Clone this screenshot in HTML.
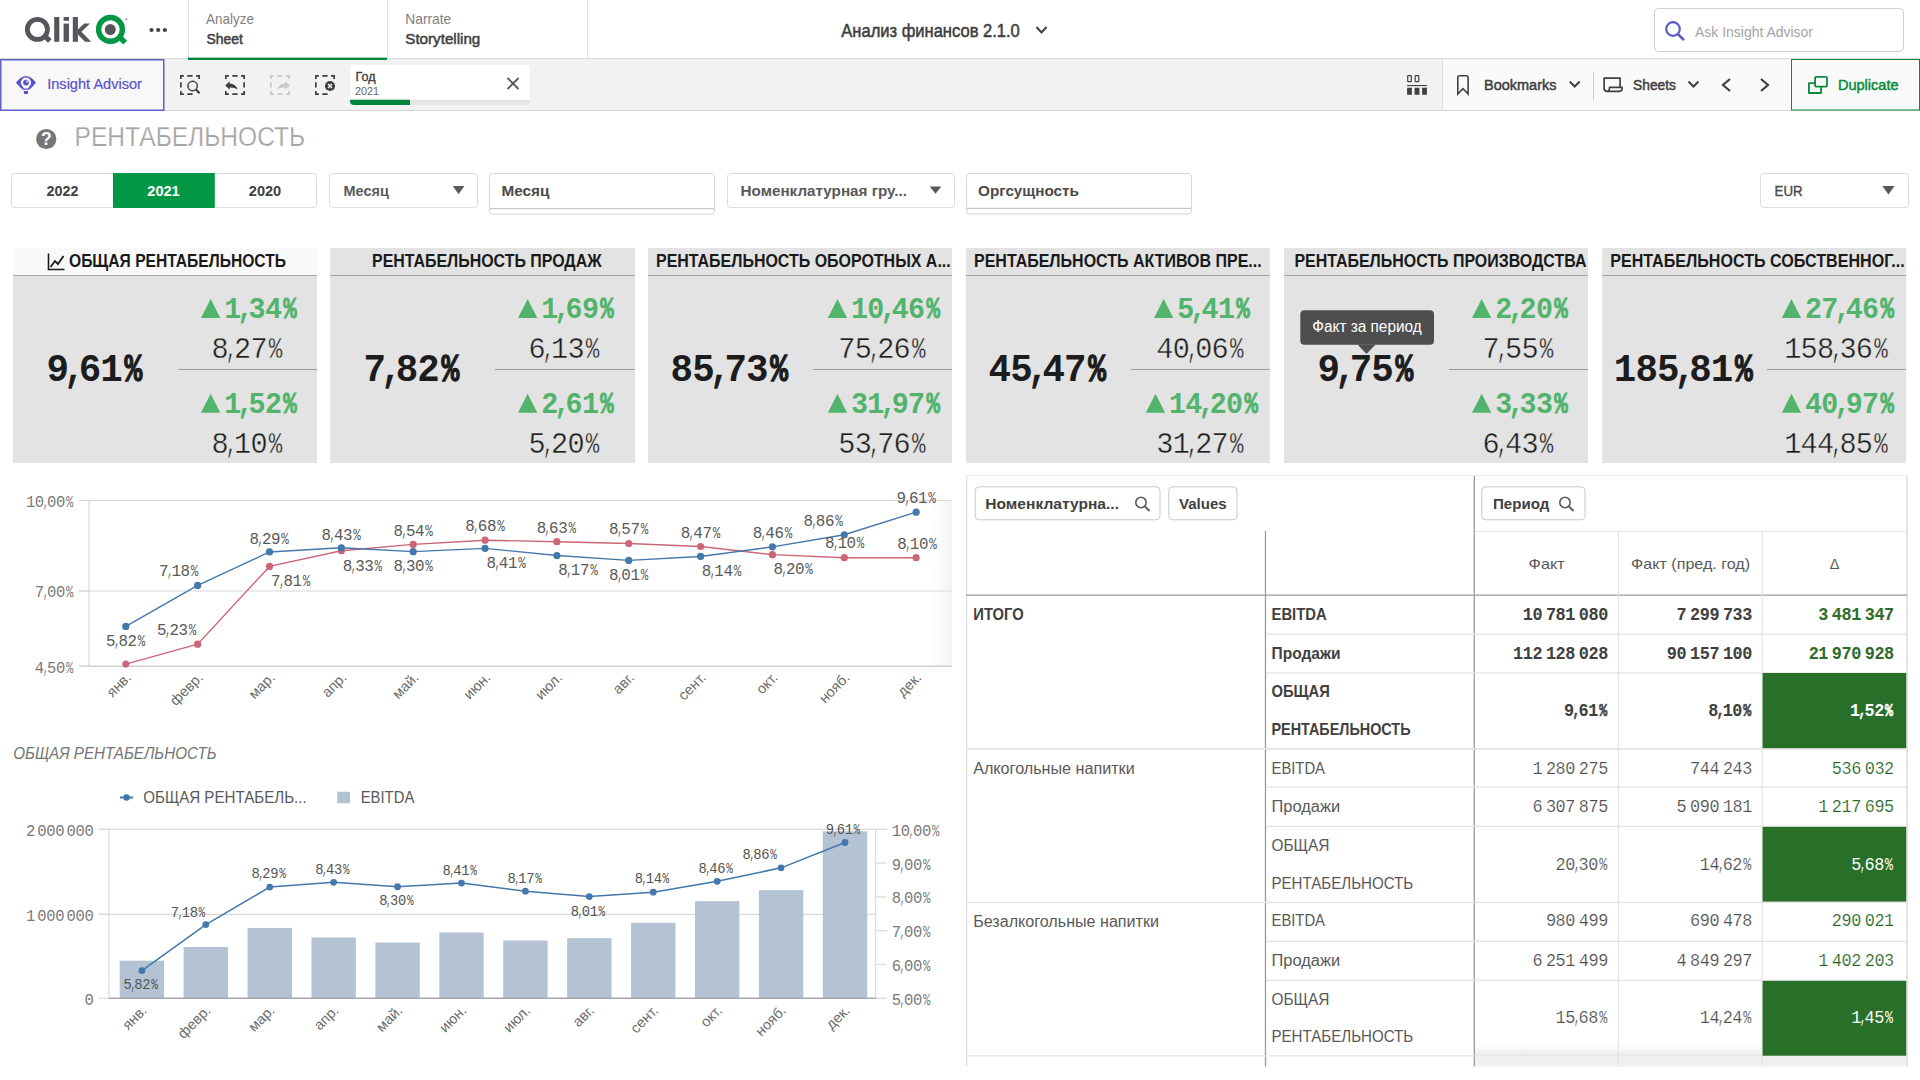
<!DOCTYPE html>
<html lang="ru"><head><meta charset="utf-8"><title>Анализ финансов 2.1.0 - Рентабельность</title>
<style>
html,body{margin:0;padding:0;background:#ffffff;width:1920px;height:1080px;overflow:hidden;}
svg{display:block;font-family:"Liberation Sans", sans-serif;}
</style></head>
<body>
<svg width="1920" height="1080" viewBox="0 0 1920 1080">
<rect x="0" y="0" width="1920" height="59" fill="#ffffff"/>
<circle cx="37.4" cy="29.4" r="10.05" fill="none" stroke="#54565b" stroke-width="4.8"/>
<polygon points="42.5,37.2 46.2,33.6 51.6,39.2 48,42.8" fill="#54565b"/>
<rect x="54.2" y="17" width="5.1" height="24.8" fill="#54565b"/>
<rect x="63.6" y="17" width="5.4" height="3.8" fill="#54565b"/>
<rect x="63.6" y="23.6" width="5.4" height="18.2" fill="#54565b"/>
<rect x="72.8" y="17" width="5.1" height="24.8" fill="#54565b"/>
<polygon points="77.9,29.6 84.3,23.6 90,23.6 81.4,31.8 91.2,41.8 85,41.8 77.9,34.6" fill="#54565b"/>
<circle cx="110.5" cy="29.4" r="11.9" fill="none" stroke="#009845" stroke-width="5.4"/>
<circle cx="110.3" cy="29.5" r="5.5" fill="#54565b"/>
<polygon points="117.2,38.6 121,34.8 127,40.8 123.2,44.6" fill="#009845"/>
<circle cx="126.2" cy="19.2" r="1.3" fill="#bbb"/>
<circle cx="151.5" cy="30" r="2.1" fill="#404040"/>
<circle cx="158.2" cy="30" r="2.1" fill="#404040"/>
<circle cx="164.9" cy="30" r="2.1" fill="#404040"/>
<line x1="188.5" y1="0" x2="188.5" y2="58" stroke="#e3e3e3" stroke-width="1" />
<line x1="387.5" y1="0" x2="387.5" y2="58" stroke="#e3e3e3" stroke-width="1" />
<line x1="587.5" y1="0" x2="587.5" y2="58" stroke="#e3e3e3" stroke-width="1" />
<rect x="188" y="57.8" width="199" height="2.2" fill="#00873c"/>
<text x="206.00" y="23.80" font-size="14.2" fill="#808080" textLength="47.90" lengthAdjust="spacingAndGlyphs">Analyze</text>
<text x="206.50" y="43.80" font-size="15" fill="#404040" textLength="36.50" lengthAdjust="spacingAndGlyphs" stroke="#404040" stroke-width="0.5">Sheet</text>
<text x="405.30" y="23.80" font-size="14.2" fill="#808080" textLength="46.00" lengthAdjust="spacingAndGlyphs">Narrate</text>
<text x="405.30" y="43.80" font-size="15" fill="#404040" textLength="75.00" lengthAdjust="spacingAndGlyphs" stroke="#404040" stroke-width="0.5">Storytelling</text>
<text x="841.30" y="36.60" font-size="18.5" fill="#404040" textLength="178.50" lengthAdjust="spacingAndGlyphs" stroke="#404040" stroke-width="0.55">Анализ финансов 2.1.0</text>
<polyline points="1036.5,27 1041.5,32.5 1046.5,27" fill="none" stroke="#404040" stroke-width="2"/>
<rect x="1654.5" y="8.5" width="249" height="43" fill="#ffffff" stroke="#cfcfcf" stroke-width="1" rx="4"/>
<circle cx="1673" cy="29" r="6.8" fill="none" stroke="#5c5cc8" stroke-width="2.2"/>
<line x1="1677.8" y1="34" x2="1684" y2="40.2" stroke="#5c5cc8" stroke-width="2.6" />
<text x="1695.00" y="36.60" font-size="14.5" fill="#a3a3a3" textLength="118.00" lengthAdjust="spacingAndGlyphs">Ask Insight Advisor</text>
<rect x="0" y="59" width="1920" height="51" fill="#f2f2f2"/>
<line x1="0" y1="58.5" x2="1920" y2="58.5" stroke="#dadada" stroke-width="1" />
<line x1="0" y1="110.5" x2="1920" y2="110.5" stroke="#d6d6d6" stroke-width="1" />
<rect x="188" y="57.8" width="199" height="2.2" fill="#00873c"/>
<rect x="0.75" y="59.75" width="163" height="50.5" fill="#f8f8f8" stroke="#6060c8" stroke-width="1.5"/>
<path d="M16,82.8 Q21,76 26,76 Q31,76 36,82.8 Q32,87.5 29.2,89.7 L22.8,89.7 Q20,87.5 16,82.8 Z" fill="#5a52cc"/>
<circle cx="26" cy="82.6" r="5.1" fill="#f8f8f8"/>
<polygon points="22.2,84.8 29.8,84.8 28.4,88.6 23.6,88.6" fill="#f8f8f8"/>
<circle cx="26" cy="82.6" r="2.9" fill="#5a52cc"/>
<circle cx="27.1" cy="81.4" r="1" fill="#f8f8f8"/>
<polygon points="23.7,91.1 28.3,91.1 27.8,93.9 24.2,93.9" fill="#5a52cc"/>
<text x="47.20" y="89.40" font-size="13.8" fill="#5a52cc" textLength="94.80" lengthAdjust="spacingAndGlyphs" stroke="#5a52cc" stroke-width="0.2">Insight Advisor</text>
<path d="M180.85,78.9 V75.85 H183.9 M187.3,75.85 H192.6 M196,75.85 H199.15 V78.9 M192.6,94.15 H187.3 M183.9,94.15 H180.85 V91 M180.85,87.6 V82.3" fill="none" stroke="#404040" stroke-width="1.7"/>
<circle cx="192.6" cy="86" r="4.7" fill="none" stroke="#404040" stroke-width="1.5"/>
<line x1="195.9" y1="89.4" x2="199.6" y2="93.2" stroke="#404040" stroke-width="2.2" />
<path d="M225.85,78.9 V75.85 H228.9 M232.3,75.85 H237.6 M241,75.85 H244.15 V78.9 M244.15,82.3 V87.6 M244.15,91 V94.15 H241 M237.6,94.15 H232.3 M228.9,94.15 H225.85 V91" fill="none" stroke="#404040" stroke-width="1.7"/>
<path d="M225.2,85.4 L229.7,81.2 L229.7,83.6 Q235.5,83.6 237.8,89.6 Q234.5,87.4 229.7,87.6 L229.7,89.8 Z" fill="#404040"/>
<path d="M270.85,78.9 V75.85 H273.9 M277.3,75.85 H282.6 M286,75.85 H289.15 V78.9 M289.15,91 V94.15 H286 M282.6,94.15 H277.3 M273.9,94.15 H270.85 V91 M270.85,87.6 V82.3" fill="none" stroke="#c9c9c9" stroke-width="1.7"/>
<path d="M289.8,85.4 L285.3,81.2 L285.3,83.6 Q279.5,83.6 277.2,89.6 Q280.5,87.4 285.3,87.6 L285.3,89.8 Z" fill="#c9c9c9"/>
<path d="M315.85,78.9 V75.85 H318.9 M322.3,75.85 H327.6 M331,75.85 H334.15 V78.9 M327.6,94.15 H322.3 M318.9,94.15 H315.85 V91 M315.85,87.6 V82.3" fill="none" stroke="#404040" stroke-width="1.7"/>
<circle cx="330" cy="86" r="5.1" fill="#404040"/>
<path d="M328,84 L332,88 M332,84 L328,88" stroke="#f2f2f2" stroke-width="1.5"/>
<rect x="350" y="65" width="180" height="40" fill="#ffffff" rx="4"/>
<path d="M350,99.8 L530,99.8 L530,101 Q530,105 526,105 L354,105 Q350,105 350,101 Z" fill="#e6e6e6"/>
<path d="M350,99.8 L410,99.8 L410,105 L354,105 Q350,105 350,101 Z" fill="#00843d"/>
<text x="355.60" y="80.70" font-size="12.4" fill="#404040" textLength="20.00" lengthAdjust="spacingAndGlyphs" stroke="#404040" stroke-width="0.35">Год</text>
<text x="355.00" y="94.80" font-size="11.2" fill="#666666" textLength="24.10" lengthAdjust="spacingAndGlyphs">2021</text>
<path d="M507.5,78 L518.5,89 M518.5,78 L507.5,89" stroke="#595959" stroke-width="1.8"/>
<rect x="1442" y="59.5" width="349" height="50.5" fill="#fafafa"/>
<line x1="1442.5" y1="59" x2="1442.5" y2="110" stroke="#dcdcdc" stroke-width="1" />
<rect x="1407.6999999999998" y="75.6" width="3.6" height="6.1" fill="none" stroke="#404040" stroke-width="1.2" rx="0.6"/>
<rect x="1415.1999999999998" y="75.6" width="3.6" height="6.1" fill="none" stroke="#404040" stroke-width="1.2" rx="0.6"/>
<rect x="1407.1" y="85" width="19.8" height="1.1" fill="#404040"/>
<rect x="1407.1" y="87.7" width="4.8" height="7.1" fill="#404040"/>
<rect x="1414.6" y="87.7" width="4.8" height="7.1" fill="#404040"/>
<rect x="1422.1" y="87.7" width="4.8" height="7.1" fill="#404040"/>
<path d="M1457.8,94 L1457.8,77.5 Q1457.8,75.8 1459.5,75.8 L1466.3,75.8 Q1468.1,75.8 1468.1,77.5 L1468.1,94 L1463,88.7 Z" fill="none" stroke="#404040" stroke-width="1.6" stroke-linejoin="miter"/>
<text x="1484.00" y="90.20" font-size="15.2" fill="#404040" textLength="72.50" lengthAdjust="spacingAndGlyphs" stroke="#404040" stroke-width="0.5">Bookmarks</text>
<polyline points="1569.7,81.5 1574.7,86.5 1579.7,81.5" fill="none" stroke="#404040" stroke-width="2"/>
<line x1="1593.5" y1="72" x2="1593.5" y2="100" stroke="#d0d0d0" stroke-width="1" />
<path d="M1620.1,87.3 V78.2 H1604.1 V88.2 Q1604.1,91.3 1607.2,91.3 H1619.4 Q1622.1,91.3 1622.1,88.6 V87.3 H1609.5 Q1609.5,91.3 1607.2,91.3" fill="none" stroke="#404040" stroke-width="1.7" stroke-linejoin="round"/>
<text x="1633.00" y="90.20" font-size="15.2" fill="#404040" textLength="43.00" lengthAdjust="spacingAndGlyphs" stroke="#404040" stroke-width="0.5">Sheets</text>
<polyline points="1688.5,81.5 1693.5,86.5 1698.5,81.5" fill="none" stroke="#404040" stroke-width="2"/>
<polyline points="1730,79 1723,85 1730,91" fill="none" stroke="#404040" stroke-width="2.2"/>
<polyline points="1761,79 1768,85 1761,91" fill="none" stroke="#404040" stroke-width="2.2"/>
<rect x="1791.5" y="59.5" width="128" height="50.5" fill="#fafafa" stroke="#0a8a3c" stroke-width="1"/>
<path d="M1815.1,83.1 H1808.9 V93 H1821.1 V86.6" fill="none" stroke="#0a8a3c" stroke-width="1.8" stroke-linejoin="round"/>
<rect x="1815.1" y="76.9" width="11.9" height="9.7" rx="1" fill="none" stroke="#0a8a3c" stroke-width="1.8"/>
<text x="1838.00" y="90.20" font-size="15.2" fill="#0a8a3c" textLength="60.50" lengthAdjust="spacingAndGlyphs" stroke="#0a8a3c" stroke-width="0.5">Duplicate</text>
<circle cx="46.25" cy="139" r="10.1" fill="#767676"/>
<text x="46.30" y="145.00" font-size="17.5" fill="#ffffff" font-weight="bold" text-anchor="middle">?</text>
<text x="74.60" y="146.00" font-size="27" fill="#a5a5a5" textLength="230.60" lengthAdjust="spacingAndGlyphs" stroke="#ffffff" stroke-width="0.25">РЕНТАБЕЛЬНОСТЬ</text>
<rect x="11.5" y="173.5" width="305" height="34" fill="#ffffff" stroke="#dcdcdc" stroke-width="1" rx="3"/>
<rect x="113" y="173" width="101.8" height="35" fill="#009845"/>
<text x="46.40" y="196.00" font-size="15" fill="#404040" font-weight="bold" textLength="32.00" lengthAdjust="spacingAndGlyphs">2022</text>
<text x="147.30" y="196.00" font-size="15" fill="#ffffff" font-weight="bold" textLength="32.40" lengthAdjust="spacingAndGlyphs">2021</text>
<text x="248.80" y="196.00" font-size="15" fill="#404040" font-weight="bold" textLength="32.40" lengthAdjust="spacingAndGlyphs">2020</text>
<rect x="329.5" y="173.5" width="148" height="34" fill="#ffffff" stroke="#dcdcdc" stroke-width="1" rx="3"/>
<text x="343.50" y="196.00" font-size="15" fill="#595959" font-weight="bold" textLength="45.30" lengthAdjust="spacingAndGlyphs">Месяц</text>
<polygon points="452.8,186 464.4,186 458.6,194.2" fill="#595959"/>
<rect x="489.5" y="173.5" width="225" height="40.5" fill="#ffffff" stroke="#d6d6d6" stroke-width="1" rx="3"/>
<line x1="490" y1="208.7" x2="714" y2="208.7" stroke="#c8c8c8" stroke-width="1.2" />
<text x="501.50" y="196.00" font-size="15.5" fill="#4a4a4a" font-weight="bold" textLength="48.00" lengthAdjust="spacingAndGlyphs">Месяц</text>
<rect x="727.5" y="173.5" width="227" height="34" fill="#ffffff" stroke="#dcdcdc" stroke-width="1" rx="3"/>
<text x="740.60" y="196.20" font-size="15" fill="#595959" font-weight="bold" textLength="166.30" lengthAdjust="spacingAndGlyphs">Номенклатурная гру...</text>
<polygon points="929.7,186.6 941.3,186.6 935.5,193.8" fill="#595959"/>
<rect x="966.5" y="173.5" width="225" height="40.5" fill="#ffffff" stroke="#d6d6d6" stroke-width="1" rx="3"/>
<line x1="967" y1="208.3" x2="1191" y2="208.3" stroke="#c8c8c8" stroke-width="1.2" />
<text x="978.00" y="196.20" font-size="15.5" fill="#4a4a4a" font-weight="bold" textLength="101.00" lengthAdjust="spacingAndGlyphs">Оргсущность</text>
<rect x="1760.5" y="173.5" width="148" height="34" fill="#ffffff" stroke="#dcdcdc" stroke-width="1" rx="3"/>
<text x="1774.60" y="196.00" font-size="15" fill="#4a4a4a" textLength="28.00" lengthAdjust="spacingAndGlyphs" stroke="#4a4a4a" stroke-width="0.4">EUR</text>
<polygon points="1882.4,186 1894.5,186 1888.45,194.4" fill="#595959"/>
<rect x="13" y="248" width="304" height="27" fill="#f9f9f9"/>
<rect x="13" y="275" width="304" height="1" fill="#a3a3a3"/>
<rect x="13" y="276" width="304" height="187" fill="#e3e3e3"/>
<text x="69.00" y="266.60" font-size="18.2" fill="#1a1a1a" font-weight="bold" textLength="217.00" lengthAdjust="spacingAndGlyphs">ОБЩАЯ РЕНТАБЕЛЬНОСТЬ</text>
<path d="M48.5,253.5 L48.5,269.5 L64.5,269.5" fill="none" stroke="#1a1a1a" stroke-width="1.6"/>
<polyline points="50.5,267 55,261 58,264 63.5,256" fill="none" stroke="#1a1a1a" stroke-width="1.8"/>
<text x="57.64" y="380.80" font-size="39.45" fill="#1c1c1c" font-weight="bold" font-family='"Liberation Mono", monospace' text-anchor="middle" textLength="22.49" lengthAdjust="spacingAndGlyphs" >9</text>
<text x="73.76" y="380.80" font-size="39.45" fill="#1c1c1c" font-weight="bold" font-family='"Liberation Mono", monospace' text-anchor="middle" textLength="16.57" lengthAdjust="spacingAndGlyphs" stroke="#1c1c1c" stroke-width="1.30">,</text>
<text x="89.88" y="380.80" font-size="39.45" fill="#1c1c1c" font-weight="bold" font-family='"Liberation Mono", monospace' text-anchor="middle" textLength="22.49" lengthAdjust="spacingAndGlyphs" >6</text>
<text x="111.46" y="380.80" font-size="39.45" fill="#1c1c1c" font-weight="bold" font-family='"Liberation Mono", monospace' text-anchor="middle" textLength="22.49" lengthAdjust="spacingAndGlyphs" >1</text>
<text x="133.30" y="380.80" font-size="39.45" fill="#1c1c1c" font-weight="bold" font-family='"Liberation Mono", monospace' text-anchor="middle" textLength="17.75" lengthAdjust="spacingAndGlyphs" stroke="#1c1c1c" stroke-width="1.30">%</text>
<rect x="178" y="369" width="139" height="1" fill="#9a9a9a"/>
<polygon points="201.01,317.90 220.31,317.90 210.66,298.90" fill="#52b46c"/>
<text x="232.69" y="317.90" font-size="29.89" fill="#52b46c" font-weight="bold" font-family='"Liberation Mono", monospace' text-anchor="middle" textLength="17.04" lengthAdjust="spacingAndGlyphs" >1</text>
<text x="244.90" y="317.90" font-size="29.89" fill="#52b46c" font-weight="bold" font-family='"Liberation Mono", monospace' text-anchor="middle" textLength="12.56" lengthAdjust="spacingAndGlyphs" stroke="#52b46c" stroke-width="0.98">,</text>
<text x="257.12" y="317.90" font-size="29.89" fill="#52b46c" font-weight="bold" font-family='"Liberation Mono", monospace' text-anchor="middle" textLength="17.04" lengthAdjust="spacingAndGlyphs" >3</text>
<text x="273.47" y="317.90" font-size="29.89" fill="#52b46c" font-weight="bold" font-family='"Liberation Mono", monospace' text-anchor="middle" textLength="17.04" lengthAdjust="spacingAndGlyphs" >4</text>
<text x="290.01" y="317.90" font-size="29.89" fill="#52b46c" font-weight="bold" font-family='"Liberation Mono", monospace' text-anchor="middle" textLength="13.45" lengthAdjust="spacingAndGlyphs" stroke="#52b46c" stroke-width="0.98">%</text>
<polygon points="201.01,412.80 220.31,412.80 210.66,393.80" fill="#52b46c"/>
<text x="232.69" y="412.80" font-size="29.89" fill="#52b46c" font-weight="bold" font-family='"Liberation Mono", monospace' text-anchor="middle" textLength="17.04" lengthAdjust="spacingAndGlyphs" >1</text>
<text x="244.90" y="412.80" font-size="29.89" fill="#52b46c" font-weight="bold" font-family='"Liberation Mono", monospace' text-anchor="middle" textLength="12.56" lengthAdjust="spacingAndGlyphs" stroke="#52b46c" stroke-width="0.98">,</text>
<text x="257.12" y="412.80" font-size="29.89" fill="#52b46c" font-weight="bold" font-family='"Liberation Mono", monospace' text-anchor="middle" textLength="17.04" lengthAdjust="spacingAndGlyphs" >5</text>
<text x="273.47" y="412.80" font-size="29.89" fill="#52b46c" font-weight="bold" font-family='"Liberation Mono", monospace' text-anchor="middle" textLength="17.04" lengthAdjust="spacingAndGlyphs" >2</text>
<text x="290.01" y="412.80" font-size="29.89" fill="#52b46c" font-weight="bold" font-family='"Liberation Mono", monospace' text-anchor="middle" textLength="13.45" lengthAdjust="spacingAndGlyphs" stroke="#52b46c" stroke-width="0.98">%</text>
<text x="220.13" y="357.80" font-size="30.05" fill="#1c1c1c" font-weight="normal" font-family='"Liberation Mono", monospace' text-anchor="middle" textLength="17.13" lengthAdjust="spacingAndGlyphs" stroke="#e3e3e3" stroke-width="0.4">8</text>
<text x="231.32" y="357.80" font-size="30.05" fill="#1c1c1c" font-weight="normal" font-family='"Liberation Mono", monospace' text-anchor="middle" textLength="9.92" lengthAdjust="spacingAndGlyphs" stroke="#e3e3e3" stroke-width="0.4">,</text>
<text x="242.50" y="357.80" font-size="30.05" fill="#1c1c1c" font-weight="normal" font-family='"Liberation Mono", monospace' text-anchor="middle" textLength="17.13" lengthAdjust="spacingAndGlyphs" stroke="#e3e3e3" stroke-width="0.4">2</text>
<text x="258.94" y="357.80" font-size="30.05" fill="#1c1c1c" font-weight="normal" font-family='"Liberation Mono", monospace' text-anchor="middle" textLength="17.13" lengthAdjust="spacingAndGlyphs" stroke="#e3e3e3" stroke-width="0.4">7</text>
<text x="275.57" y="357.80" font-size="30.05" fill="#1c1c1c" font-weight="normal" font-family='"Liberation Mono", monospace' text-anchor="middle" textLength="13.52" lengthAdjust="spacingAndGlyphs" stroke="#e3e3e3" stroke-width="0.4">%</text>
<text x="220.13" y="452.80" font-size="30.05" fill="#1c1c1c" font-weight="normal" font-family='"Liberation Mono", monospace' text-anchor="middle" textLength="17.13" lengthAdjust="spacingAndGlyphs" stroke="#e3e3e3" stroke-width="0.4">8</text>
<text x="231.32" y="452.80" font-size="30.05" fill="#1c1c1c" font-weight="normal" font-family='"Liberation Mono", monospace' text-anchor="middle" textLength="9.92" lengthAdjust="spacingAndGlyphs" stroke="#e3e3e3" stroke-width="0.4">,</text>
<text x="242.50" y="452.80" font-size="30.05" fill="#1c1c1c" font-weight="normal" font-family='"Liberation Mono", monospace' text-anchor="middle" textLength="17.13" lengthAdjust="spacingAndGlyphs" stroke="#e3e3e3" stroke-width="0.4">1</text>
<text x="258.94" y="452.80" font-size="30.05" fill="#1c1c1c" font-weight="normal" font-family='"Liberation Mono", monospace' text-anchor="middle" textLength="17.13" lengthAdjust="spacingAndGlyphs" stroke="#e3e3e3" stroke-width="0.4">0</text>
<text x="275.57" y="452.80" font-size="30.05" fill="#1c1c1c" font-weight="normal" font-family='"Liberation Mono", monospace' text-anchor="middle" textLength="13.52" lengthAdjust="spacingAndGlyphs" stroke="#e3e3e3" stroke-width="0.4">%</text>
<rect x="330" y="248" width="305" height="27" fill="#e3e3e3"/>
<rect x="330" y="275" width="305" height="1" fill="#a3a3a3"/>
<rect x="330" y="276" width="305" height="187" fill="#e3e3e3"/>
<text x="372.00" y="266.60" font-size="18.2" fill="#1a1a1a" font-weight="bold" textLength="229.60" lengthAdjust="spacingAndGlyphs">РЕНТАБЕЛЬНОСТЬ ПРОДАЖ</text>
<text x="374.64" y="380.80" font-size="39.45" fill="#1c1c1c" font-weight="bold" font-family='"Liberation Mono", monospace' text-anchor="middle" textLength="22.49" lengthAdjust="spacingAndGlyphs" >7</text>
<text x="390.76" y="380.80" font-size="39.45" fill="#1c1c1c" font-weight="bold" font-family='"Liberation Mono", monospace' text-anchor="middle" textLength="16.57" lengthAdjust="spacingAndGlyphs" stroke="#1c1c1c" stroke-width="1.30">,</text>
<text x="406.88" y="380.80" font-size="39.45" fill="#1c1c1c" font-weight="bold" font-family='"Liberation Mono", monospace' text-anchor="middle" textLength="22.49" lengthAdjust="spacingAndGlyphs" >8</text>
<text x="428.46" y="380.80" font-size="39.45" fill="#1c1c1c" font-weight="bold" font-family='"Liberation Mono", monospace' text-anchor="middle" textLength="22.49" lengthAdjust="spacingAndGlyphs" >2</text>
<text x="450.30" y="380.80" font-size="39.45" fill="#1c1c1c" font-weight="bold" font-family='"Liberation Mono", monospace' text-anchor="middle" textLength="17.75" lengthAdjust="spacingAndGlyphs" stroke="#1c1c1c" stroke-width="1.30">%</text>
<rect x="495" y="369" width="140" height="1" fill="#9a9a9a"/>
<polygon points="518.01,317.90 537.31,317.90 527.66,298.90" fill="#52b46c"/>
<text x="549.69" y="317.90" font-size="29.89" fill="#52b46c" font-weight="bold" font-family='"Liberation Mono", monospace' text-anchor="middle" textLength="17.04" lengthAdjust="spacingAndGlyphs" >1</text>
<text x="561.90" y="317.90" font-size="29.89" fill="#52b46c" font-weight="bold" font-family='"Liberation Mono", monospace' text-anchor="middle" textLength="12.56" lengthAdjust="spacingAndGlyphs" stroke="#52b46c" stroke-width="0.98">,</text>
<text x="574.12" y="317.90" font-size="29.89" fill="#52b46c" font-weight="bold" font-family='"Liberation Mono", monospace' text-anchor="middle" textLength="17.04" lengthAdjust="spacingAndGlyphs" >6</text>
<text x="590.47" y="317.90" font-size="29.89" fill="#52b46c" font-weight="bold" font-family='"Liberation Mono", monospace' text-anchor="middle" textLength="17.04" lengthAdjust="spacingAndGlyphs" >9</text>
<text x="607.01" y="317.90" font-size="29.89" fill="#52b46c" font-weight="bold" font-family='"Liberation Mono", monospace' text-anchor="middle" textLength="13.45" lengthAdjust="spacingAndGlyphs" stroke="#52b46c" stroke-width="0.98">%</text>
<polygon points="518.01,412.80 537.31,412.80 527.66,393.80" fill="#52b46c"/>
<text x="549.69" y="412.80" font-size="29.89" fill="#52b46c" font-weight="bold" font-family='"Liberation Mono", monospace' text-anchor="middle" textLength="17.04" lengthAdjust="spacingAndGlyphs" >2</text>
<text x="561.90" y="412.80" font-size="29.89" fill="#52b46c" font-weight="bold" font-family='"Liberation Mono", monospace' text-anchor="middle" textLength="12.56" lengthAdjust="spacingAndGlyphs" stroke="#52b46c" stroke-width="0.98">,</text>
<text x="574.12" y="412.80" font-size="29.89" fill="#52b46c" font-weight="bold" font-family='"Liberation Mono", monospace' text-anchor="middle" textLength="17.04" lengthAdjust="spacingAndGlyphs" >6</text>
<text x="590.47" y="412.80" font-size="29.89" fill="#52b46c" font-weight="bold" font-family='"Liberation Mono", monospace' text-anchor="middle" textLength="17.04" lengthAdjust="spacingAndGlyphs" >1</text>
<text x="607.01" y="412.80" font-size="29.89" fill="#52b46c" font-weight="bold" font-family='"Liberation Mono", monospace' text-anchor="middle" textLength="13.45" lengthAdjust="spacingAndGlyphs" stroke="#52b46c" stroke-width="0.98">%</text>
<text x="537.13" y="357.80" font-size="30.05" fill="#1c1c1c" font-weight="normal" font-family='"Liberation Mono", monospace' text-anchor="middle" textLength="17.13" lengthAdjust="spacingAndGlyphs" stroke="#e3e3e3" stroke-width="0.4">6</text>
<text x="548.32" y="357.80" font-size="30.05" fill="#1c1c1c" font-weight="normal" font-family='"Liberation Mono", monospace' text-anchor="middle" textLength="9.92" lengthAdjust="spacingAndGlyphs" stroke="#e3e3e3" stroke-width="0.4">,</text>
<text x="559.50" y="357.80" font-size="30.05" fill="#1c1c1c" font-weight="normal" font-family='"Liberation Mono", monospace' text-anchor="middle" textLength="17.13" lengthAdjust="spacingAndGlyphs" stroke="#e3e3e3" stroke-width="0.4">1</text>
<text x="575.94" y="357.80" font-size="30.05" fill="#1c1c1c" font-weight="normal" font-family='"Liberation Mono", monospace' text-anchor="middle" textLength="17.13" lengthAdjust="spacingAndGlyphs" stroke="#e3e3e3" stroke-width="0.4">3</text>
<text x="592.57" y="357.80" font-size="30.05" fill="#1c1c1c" font-weight="normal" font-family='"Liberation Mono", monospace' text-anchor="middle" textLength="13.52" lengthAdjust="spacingAndGlyphs" stroke="#e3e3e3" stroke-width="0.4">%</text>
<text x="537.13" y="452.80" font-size="30.05" fill="#1c1c1c" font-weight="normal" font-family='"Liberation Mono", monospace' text-anchor="middle" textLength="17.13" lengthAdjust="spacingAndGlyphs" stroke="#e3e3e3" stroke-width="0.4">5</text>
<text x="548.32" y="452.80" font-size="30.05" fill="#1c1c1c" font-weight="normal" font-family='"Liberation Mono", monospace' text-anchor="middle" textLength="9.92" lengthAdjust="spacingAndGlyphs" stroke="#e3e3e3" stroke-width="0.4">,</text>
<text x="559.50" y="452.80" font-size="30.05" fill="#1c1c1c" font-weight="normal" font-family='"Liberation Mono", monospace' text-anchor="middle" textLength="17.13" lengthAdjust="spacingAndGlyphs" stroke="#e3e3e3" stroke-width="0.4">2</text>
<text x="575.94" y="452.80" font-size="30.05" fill="#1c1c1c" font-weight="normal" font-family='"Liberation Mono", monospace' text-anchor="middle" textLength="17.13" lengthAdjust="spacingAndGlyphs" stroke="#e3e3e3" stroke-width="0.4">0</text>
<text x="592.57" y="452.80" font-size="30.05" fill="#1c1c1c" font-weight="normal" font-family='"Liberation Mono", monospace' text-anchor="middle" textLength="13.52" lengthAdjust="spacingAndGlyphs" stroke="#e3e3e3" stroke-width="0.4">%</text>
<rect x="648" y="248" width="304" height="27" fill="#e3e3e3"/>
<rect x="648" y="275" width="304" height="1" fill="#a3a3a3"/>
<rect x="648" y="276" width="304" height="187" fill="#e3e3e3"/>
<text x="656.00" y="266.60" font-size="18.2" fill="#1a1a1a" font-weight="bold" textLength="294.70" lengthAdjust="spacingAndGlyphs">РЕНТАБЕЛЬНОСТЬ ОБОРОТНЫХ А...</text>
<text x="681.85" y="380.80" font-size="39.45" fill="#1c1c1c" font-weight="bold" font-family='"Liberation Mono", monospace' text-anchor="middle" textLength="22.49" lengthAdjust="spacingAndGlyphs" >8</text>
<text x="703.43" y="380.80" font-size="39.45" fill="#1c1c1c" font-weight="bold" font-family='"Liberation Mono", monospace' text-anchor="middle" textLength="22.49" lengthAdjust="spacingAndGlyphs" >5</text>
<text x="719.55" y="380.80" font-size="39.45" fill="#1c1c1c" font-weight="bold" font-family='"Liberation Mono", monospace' text-anchor="middle" textLength="16.57" lengthAdjust="spacingAndGlyphs" stroke="#1c1c1c" stroke-width="1.30">,</text>
<text x="735.67" y="380.80" font-size="39.45" fill="#1c1c1c" font-weight="bold" font-family='"Liberation Mono", monospace' text-anchor="middle" textLength="22.49" lengthAdjust="spacingAndGlyphs" >7</text>
<text x="757.25" y="380.80" font-size="39.45" fill="#1c1c1c" font-weight="bold" font-family='"Liberation Mono", monospace' text-anchor="middle" textLength="22.49" lengthAdjust="spacingAndGlyphs" >3</text>
<text x="779.09" y="380.80" font-size="39.45" fill="#1c1c1c" font-weight="bold" font-family='"Liberation Mono", monospace' text-anchor="middle" textLength="17.75" lengthAdjust="spacingAndGlyphs" stroke="#1c1c1c" stroke-width="1.30">%</text>
<rect x="813" y="369" width="139" height="1" fill="#9a9a9a"/>
<polygon points="827.84,317.90 847.14,317.90 837.49,298.90" fill="#52b46c"/>
<text x="859.51" y="317.90" font-size="29.89" fill="#52b46c" font-weight="bold" font-family='"Liberation Mono", monospace' text-anchor="middle" textLength="17.04" lengthAdjust="spacingAndGlyphs" >1</text>
<text x="875.86" y="317.90" font-size="29.89" fill="#52b46c" font-weight="bold" font-family='"Liberation Mono", monospace' text-anchor="middle" textLength="17.04" lengthAdjust="spacingAndGlyphs" >0</text>
<text x="888.08" y="317.90" font-size="29.89" fill="#52b46c" font-weight="bold" font-family='"Liberation Mono", monospace' text-anchor="middle" textLength="12.56" lengthAdjust="spacingAndGlyphs" stroke="#52b46c" stroke-width="0.98">,</text>
<text x="900.29" y="317.90" font-size="29.89" fill="#52b46c" font-weight="bold" font-family='"Liberation Mono", monospace' text-anchor="middle" textLength="17.04" lengthAdjust="spacingAndGlyphs" >4</text>
<text x="916.64" y="317.90" font-size="29.89" fill="#52b46c" font-weight="bold" font-family='"Liberation Mono", monospace' text-anchor="middle" textLength="17.04" lengthAdjust="spacingAndGlyphs" >6</text>
<text x="933.19" y="317.90" font-size="29.89" fill="#52b46c" font-weight="bold" font-family='"Liberation Mono", monospace' text-anchor="middle" textLength="13.45" lengthAdjust="spacingAndGlyphs" stroke="#52b46c" stroke-width="0.98">%</text>
<polygon points="827.84,412.80 847.14,412.80 837.49,393.80" fill="#52b46c"/>
<text x="859.51" y="412.80" font-size="29.89" fill="#52b46c" font-weight="bold" font-family='"Liberation Mono", monospace' text-anchor="middle" textLength="17.04" lengthAdjust="spacingAndGlyphs" >3</text>
<text x="875.86" y="412.80" font-size="29.89" fill="#52b46c" font-weight="bold" font-family='"Liberation Mono", monospace' text-anchor="middle" textLength="17.04" lengthAdjust="spacingAndGlyphs" >1</text>
<text x="888.08" y="412.80" font-size="29.89" fill="#52b46c" font-weight="bold" font-family='"Liberation Mono", monospace' text-anchor="middle" textLength="12.56" lengthAdjust="spacingAndGlyphs" stroke="#52b46c" stroke-width="0.98">,</text>
<text x="900.29" y="412.80" font-size="29.89" fill="#52b46c" font-weight="bold" font-family='"Liberation Mono", monospace' text-anchor="middle" textLength="17.04" lengthAdjust="spacingAndGlyphs" >9</text>
<text x="916.64" y="412.80" font-size="29.89" fill="#52b46c" font-weight="bold" font-family='"Liberation Mono", monospace' text-anchor="middle" textLength="17.04" lengthAdjust="spacingAndGlyphs" >7</text>
<text x="933.19" y="412.80" font-size="29.89" fill="#52b46c" font-weight="bold" font-family='"Liberation Mono", monospace' text-anchor="middle" textLength="13.45" lengthAdjust="spacingAndGlyphs" stroke="#52b46c" stroke-width="0.98">%</text>
<text x="846.91" y="357.80" font-size="30.05" fill="#1c1c1c" font-weight="normal" font-family='"Liberation Mono", monospace' text-anchor="middle" textLength="17.13" lengthAdjust="spacingAndGlyphs" stroke="#e3e3e3" stroke-width="0.4">7</text>
<text x="863.35" y="357.80" font-size="30.05" fill="#1c1c1c" font-weight="normal" font-family='"Liberation Mono", monospace' text-anchor="middle" textLength="17.13" lengthAdjust="spacingAndGlyphs" stroke="#e3e3e3" stroke-width="0.4">5</text>
<text x="874.53" y="357.80" font-size="30.05" fill="#1c1c1c" font-weight="normal" font-family='"Liberation Mono", monospace' text-anchor="middle" textLength="9.92" lengthAdjust="spacingAndGlyphs" stroke="#e3e3e3" stroke-width="0.4">,</text>
<text x="885.72" y="357.80" font-size="30.05" fill="#1c1c1c" font-weight="normal" font-family='"Liberation Mono", monospace' text-anchor="middle" textLength="17.13" lengthAdjust="spacingAndGlyphs" stroke="#e3e3e3" stroke-width="0.4">2</text>
<text x="902.16" y="357.80" font-size="30.05" fill="#1c1c1c" font-weight="normal" font-family='"Liberation Mono", monospace' text-anchor="middle" textLength="17.13" lengthAdjust="spacingAndGlyphs" stroke="#e3e3e3" stroke-width="0.4">6</text>
<text x="918.79" y="357.80" font-size="30.05" fill="#1c1c1c" font-weight="normal" font-family='"Liberation Mono", monospace' text-anchor="middle" textLength="13.52" lengthAdjust="spacingAndGlyphs" stroke="#e3e3e3" stroke-width="0.4">%</text>
<text x="846.91" y="452.80" font-size="30.05" fill="#1c1c1c" font-weight="normal" font-family='"Liberation Mono", monospace' text-anchor="middle" textLength="17.13" lengthAdjust="spacingAndGlyphs" stroke="#e3e3e3" stroke-width="0.4">5</text>
<text x="863.35" y="452.80" font-size="30.05" fill="#1c1c1c" font-weight="normal" font-family='"Liberation Mono", monospace' text-anchor="middle" textLength="17.13" lengthAdjust="spacingAndGlyphs" stroke="#e3e3e3" stroke-width="0.4">3</text>
<text x="874.53" y="452.80" font-size="30.05" fill="#1c1c1c" font-weight="normal" font-family='"Liberation Mono", monospace' text-anchor="middle" textLength="9.92" lengthAdjust="spacingAndGlyphs" stroke="#e3e3e3" stroke-width="0.4">,</text>
<text x="885.72" y="452.80" font-size="30.05" fill="#1c1c1c" font-weight="normal" font-family='"Liberation Mono", monospace' text-anchor="middle" textLength="17.13" lengthAdjust="spacingAndGlyphs" stroke="#e3e3e3" stroke-width="0.4">7</text>
<text x="902.16" y="452.80" font-size="30.05" fill="#1c1c1c" font-weight="normal" font-family='"Liberation Mono", monospace' text-anchor="middle" textLength="17.13" lengthAdjust="spacingAndGlyphs" stroke="#e3e3e3" stroke-width="0.4">6</text>
<text x="918.79" y="452.80" font-size="30.05" fill="#1c1c1c" font-weight="normal" font-family='"Liberation Mono", monospace' text-anchor="middle" textLength="13.52" lengthAdjust="spacingAndGlyphs" stroke="#e3e3e3" stroke-width="0.4">%</text>
<rect x="966" y="248" width="304" height="27" fill="#e3e3e3"/>
<rect x="966" y="275" width="304" height="1" fill="#a3a3a3"/>
<rect x="966" y="276" width="304" height="187" fill="#e3e3e3"/>
<text x="974.00" y="266.60" font-size="18.2" fill="#1a1a1a" font-weight="bold" textLength="287.70" lengthAdjust="spacingAndGlyphs">РЕНТАБЕЛЬНОСТЬ АКТИВОВ ПРЕ...</text>
<text x="999.85" y="380.80" font-size="39.45" fill="#1c1c1c" font-weight="bold" font-family='"Liberation Mono", monospace' text-anchor="middle" textLength="22.49" lengthAdjust="spacingAndGlyphs" >4</text>
<text x="1021.43" y="380.80" font-size="39.45" fill="#1c1c1c" font-weight="bold" font-family='"Liberation Mono", monospace' text-anchor="middle" textLength="22.49" lengthAdjust="spacingAndGlyphs" >5</text>
<text x="1037.55" y="380.80" font-size="39.45" fill="#1c1c1c" font-weight="bold" font-family='"Liberation Mono", monospace' text-anchor="middle" textLength="16.57" lengthAdjust="spacingAndGlyphs" stroke="#1c1c1c" stroke-width="1.30">,</text>
<text x="1053.67" y="380.80" font-size="39.45" fill="#1c1c1c" font-weight="bold" font-family='"Liberation Mono", monospace' text-anchor="middle" textLength="22.49" lengthAdjust="spacingAndGlyphs" >4</text>
<text x="1075.25" y="380.80" font-size="39.45" fill="#1c1c1c" font-weight="bold" font-family='"Liberation Mono", monospace' text-anchor="middle" textLength="22.49" lengthAdjust="spacingAndGlyphs" >7</text>
<text x="1097.09" y="380.80" font-size="39.45" fill="#1c1c1c" font-weight="bold" font-family='"Liberation Mono", monospace' text-anchor="middle" textLength="17.75" lengthAdjust="spacingAndGlyphs" stroke="#1c1c1c" stroke-width="1.30">%</text>
<rect x="1131" y="369" width="139" height="1" fill="#9a9a9a"/>
<polygon points="1154.01,317.90 1173.31,317.90 1163.66,298.90" fill="#52b46c"/>
<text x="1185.69" y="317.90" font-size="29.89" fill="#52b46c" font-weight="bold" font-family='"Liberation Mono", monospace' text-anchor="middle" textLength="17.04" lengthAdjust="spacingAndGlyphs" >5</text>
<text x="1197.90" y="317.90" font-size="29.89" fill="#52b46c" font-weight="bold" font-family='"Liberation Mono", monospace' text-anchor="middle" textLength="12.56" lengthAdjust="spacingAndGlyphs" stroke="#52b46c" stroke-width="0.98">,</text>
<text x="1210.12" y="317.90" font-size="29.89" fill="#52b46c" font-weight="bold" font-family='"Liberation Mono", monospace' text-anchor="middle" textLength="17.04" lengthAdjust="spacingAndGlyphs" >4</text>
<text x="1226.47" y="317.90" font-size="29.89" fill="#52b46c" font-weight="bold" font-family='"Liberation Mono", monospace' text-anchor="middle" textLength="17.04" lengthAdjust="spacingAndGlyphs" >1</text>
<text x="1243.01" y="317.90" font-size="29.89" fill="#52b46c" font-weight="bold" font-family='"Liberation Mono", monospace' text-anchor="middle" textLength="13.45" lengthAdjust="spacingAndGlyphs" stroke="#52b46c" stroke-width="0.98">%</text>
<polygon points="1145.84,412.80 1165.14,412.80 1155.49,393.80" fill="#52b46c"/>
<text x="1177.51" y="412.80" font-size="29.89" fill="#52b46c" font-weight="bold" font-family='"Liberation Mono", monospace' text-anchor="middle" textLength="17.04" lengthAdjust="spacingAndGlyphs" >1</text>
<text x="1193.86" y="412.80" font-size="29.89" fill="#52b46c" font-weight="bold" font-family='"Liberation Mono", monospace' text-anchor="middle" textLength="17.04" lengthAdjust="spacingAndGlyphs" >4</text>
<text x="1206.08" y="412.80" font-size="29.89" fill="#52b46c" font-weight="bold" font-family='"Liberation Mono", monospace' text-anchor="middle" textLength="12.56" lengthAdjust="spacingAndGlyphs" stroke="#52b46c" stroke-width="0.98">,</text>
<text x="1218.29" y="412.80" font-size="29.89" fill="#52b46c" font-weight="bold" font-family='"Liberation Mono", monospace' text-anchor="middle" textLength="17.04" lengthAdjust="spacingAndGlyphs" >2</text>
<text x="1234.64" y="412.80" font-size="29.89" fill="#52b46c" font-weight="bold" font-family='"Liberation Mono", monospace' text-anchor="middle" textLength="17.04" lengthAdjust="spacingAndGlyphs" >0</text>
<text x="1251.19" y="412.80" font-size="29.89" fill="#52b46c" font-weight="bold" font-family='"Liberation Mono", monospace' text-anchor="middle" textLength="13.45" lengthAdjust="spacingAndGlyphs" stroke="#52b46c" stroke-width="0.98">%</text>
<text x="1164.91" y="357.80" font-size="30.05" fill="#1c1c1c" font-weight="normal" font-family='"Liberation Mono", monospace' text-anchor="middle" textLength="17.13" lengthAdjust="spacingAndGlyphs" stroke="#e3e3e3" stroke-width="0.4">4</text>
<text x="1181.35" y="357.80" font-size="30.05" fill="#1c1c1c" font-weight="normal" font-family='"Liberation Mono", monospace' text-anchor="middle" textLength="17.13" lengthAdjust="spacingAndGlyphs" stroke="#e3e3e3" stroke-width="0.4">0</text>
<text x="1192.54" y="357.80" font-size="30.05" fill="#1c1c1c" font-weight="normal" font-family='"Liberation Mono", monospace' text-anchor="middle" textLength="9.92" lengthAdjust="spacingAndGlyphs" stroke="#e3e3e3" stroke-width="0.4">,</text>
<text x="1203.72" y="357.80" font-size="30.05" fill="#1c1c1c" font-weight="normal" font-family='"Liberation Mono", monospace' text-anchor="middle" textLength="17.13" lengthAdjust="spacingAndGlyphs" stroke="#e3e3e3" stroke-width="0.4">0</text>
<text x="1220.16" y="357.80" font-size="30.05" fill="#1c1c1c" font-weight="normal" font-family='"Liberation Mono", monospace' text-anchor="middle" textLength="17.13" lengthAdjust="spacingAndGlyphs" stroke="#e3e3e3" stroke-width="0.4">6</text>
<text x="1236.79" y="357.80" font-size="30.05" fill="#1c1c1c" font-weight="normal" font-family='"Liberation Mono", monospace' text-anchor="middle" textLength="13.52" lengthAdjust="spacingAndGlyphs" stroke="#e3e3e3" stroke-width="0.4">%</text>
<text x="1164.91" y="452.80" font-size="30.05" fill="#1c1c1c" font-weight="normal" font-family='"Liberation Mono", monospace' text-anchor="middle" textLength="17.13" lengthAdjust="spacingAndGlyphs" stroke="#e3e3e3" stroke-width="0.4">3</text>
<text x="1181.35" y="452.80" font-size="30.05" fill="#1c1c1c" font-weight="normal" font-family='"Liberation Mono", monospace' text-anchor="middle" textLength="17.13" lengthAdjust="spacingAndGlyphs" stroke="#e3e3e3" stroke-width="0.4">1</text>
<text x="1192.54" y="452.80" font-size="30.05" fill="#1c1c1c" font-weight="normal" font-family='"Liberation Mono", monospace' text-anchor="middle" textLength="9.92" lengthAdjust="spacingAndGlyphs" stroke="#e3e3e3" stroke-width="0.4">,</text>
<text x="1203.72" y="452.80" font-size="30.05" fill="#1c1c1c" font-weight="normal" font-family='"Liberation Mono", monospace' text-anchor="middle" textLength="17.13" lengthAdjust="spacingAndGlyphs" stroke="#e3e3e3" stroke-width="0.4">2</text>
<text x="1220.16" y="452.80" font-size="30.05" fill="#1c1c1c" font-weight="normal" font-family='"Liberation Mono", monospace' text-anchor="middle" textLength="17.13" lengthAdjust="spacingAndGlyphs" stroke="#e3e3e3" stroke-width="0.4">7</text>
<text x="1236.79" y="452.80" font-size="30.05" fill="#1c1c1c" font-weight="normal" font-family='"Liberation Mono", monospace' text-anchor="middle" textLength="13.52" lengthAdjust="spacingAndGlyphs" stroke="#e3e3e3" stroke-width="0.4">%</text>
<rect x="1284" y="248" width="304" height="27" fill="#e3e3e3"/>
<rect x="1284" y="275" width="304" height="1" fill="#a3a3a3"/>
<rect x="1284" y="276" width="304" height="187" fill="#e3e3e3"/>
<text x="1294.40" y="266.60" font-size="18.2" fill="#1a1a1a" font-weight="bold" textLength="292.10" lengthAdjust="spacingAndGlyphs">РЕНТАБЕЛЬНОСТЬ ПРОИЗВОДСТВА</text>
<text x="1328.64" y="380.80" font-size="39.45" fill="#1c1c1c" font-weight="bold" font-family='"Liberation Mono", monospace' text-anchor="middle" textLength="22.49" lengthAdjust="spacingAndGlyphs" >9</text>
<text x="1344.76" y="380.80" font-size="39.45" fill="#1c1c1c" font-weight="bold" font-family='"Liberation Mono", monospace' text-anchor="middle" textLength="16.57" lengthAdjust="spacingAndGlyphs" stroke="#1c1c1c" stroke-width="1.30">,</text>
<text x="1360.88" y="380.80" font-size="39.45" fill="#1c1c1c" font-weight="bold" font-family='"Liberation Mono", monospace' text-anchor="middle" textLength="22.49" lengthAdjust="spacingAndGlyphs" >7</text>
<text x="1382.46" y="380.80" font-size="39.45" fill="#1c1c1c" font-weight="bold" font-family='"Liberation Mono", monospace' text-anchor="middle" textLength="22.49" lengthAdjust="spacingAndGlyphs" >5</text>
<text x="1404.30" y="380.80" font-size="39.45" fill="#1c1c1c" font-weight="bold" font-family='"Liberation Mono", monospace' text-anchor="middle" textLength="17.75" lengthAdjust="spacingAndGlyphs" stroke="#1c1c1c" stroke-width="1.30">%</text>
<rect x="1449" y="369" width="139" height="1" fill="#9a9a9a"/>
<polygon points="1472.01,317.90 1491.31,317.90 1481.66,298.90" fill="#52b46c"/>
<text x="1503.69" y="317.90" font-size="29.89" fill="#52b46c" font-weight="bold" font-family='"Liberation Mono", monospace' text-anchor="middle" textLength="17.04" lengthAdjust="spacingAndGlyphs" >2</text>
<text x="1515.90" y="317.90" font-size="29.89" fill="#52b46c" font-weight="bold" font-family='"Liberation Mono", monospace' text-anchor="middle" textLength="12.56" lengthAdjust="spacingAndGlyphs" stroke="#52b46c" stroke-width="0.98">,</text>
<text x="1528.12" y="317.90" font-size="29.89" fill="#52b46c" font-weight="bold" font-family='"Liberation Mono", monospace' text-anchor="middle" textLength="17.04" lengthAdjust="spacingAndGlyphs" >2</text>
<text x="1544.47" y="317.90" font-size="29.89" fill="#52b46c" font-weight="bold" font-family='"Liberation Mono", monospace' text-anchor="middle" textLength="17.04" lengthAdjust="spacingAndGlyphs" >0</text>
<text x="1561.01" y="317.90" font-size="29.89" fill="#52b46c" font-weight="bold" font-family='"Liberation Mono", monospace' text-anchor="middle" textLength="13.45" lengthAdjust="spacingAndGlyphs" stroke="#52b46c" stroke-width="0.98">%</text>
<polygon points="1472.01,412.80 1491.31,412.80 1481.66,393.80" fill="#52b46c"/>
<text x="1503.69" y="412.80" font-size="29.89" fill="#52b46c" font-weight="bold" font-family='"Liberation Mono", monospace' text-anchor="middle" textLength="17.04" lengthAdjust="spacingAndGlyphs" >3</text>
<text x="1515.90" y="412.80" font-size="29.89" fill="#52b46c" font-weight="bold" font-family='"Liberation Mono", monospace' text-anchor="middle" textLength="12.56" lengthAdjust="spacingAndGlyphs" stroke="#52b46c" stroke-width="0.98">,</text>
<text x="1528.12" y="412.80" font-size="29.89" fill="#52b46c" font-weight="bold" font-family='"Liberation Mono", monospace' text-anchor="middle" textLength="17.04" lengthAdjust="spacingAndGlyphs" >3</text>
<text x="1544.47" y="412.80" font-size="29.89" fill="#52b46c" font-weight="bold" font-family='"Liberation Mono", monospace' text-anchor="middle" textLength="17.04" lengthAdjust="spacingAndGlyphs" >3</text>
<text x="1561.01" y="412.80" font-size="29.89" fill="#52b46c" font-weight="bold" font-family='"Liberation Mono", monospace' text-anchor="middle" textLength="13.45" lengthAdjust="spacingAndGlyphs" stroke="#52b46c" stroke-width="0.98">%</text>
<text x="1491.13" y="357.80" font-size="30.05" fill="#1c1c1c" font-weight="normal" font-family='"Liberation Mono", monospace' text-anchor="middle" textLength="17.13" lengthAdjust="spacingAndGlyphs" stroke="#e3e3e3" stroke-width="0.4">7</text>
<text x="1502.32" y="357.80" font-size="30.05" fill="#1c1c1c" font-weight="normal" font-family='"Liberation Mono", monospace' text-anchor="middle" textLength="9.92" lengthAdjust="spacingAndGlyphs" stroke="#e3e3e3" stroke-width="0.4">,</text>
<text x="1513.51" y="357.80" font-size="30.05" fill="#1c1c1c" font-weight="normal" font-family='"Liberation Mono", monospace' text-anchor="middle" textLength="17.13" lengthAdjust="spacingAndGlyphs" stroke="#e3e3e3" stroke-width="0.4">5</text>
<text x="1529.94" y="357.80" font-size="30.05" fill="#1c1c1c" font-weight="normal" font-family='"Liberation Mono", monospace' text-anchor="middle" textLength="17.13" lengthAdjust="spacingAndGlyphs" stroke="#e3e3e3" stroke-width="0.4">5</text>
<text x="1546.57" y="357.80" font-size="30.05" fill="#1c1c1c" font-weight="normal" font-family='"Liberation Mono", monospace' text-anchor="middle" textLength="13.52" lengthAdjust="spacingAndGlyphs" stroke="#e3e3e3" stroke-width="0.4">%</text>
<text x="1491.13" y="452.80" font-size="30.05" fill="#1c1c1c" font-weight="normal" font-family='"Liberation Mono", monospace' text-anchor="middle" textLength="17.13" lengthAdjust="spacingAndGlyphs" stroke="#e3e3e3" stroke-width="0.4">6</text>
<text x="1502.32" y="452.80" font-size="30.05" fill="#1c1c1c" font-weight="normal" font-family='"Liberation Mono", monospace' text-anchor="middle" textLength="9.92" lengthAdjust="spacingAndGlyphs" stroke="#e3e3e3" stroke-width="0.4">,</text>
<text x="1513.51" y="452.80" font-size="30.05" fill="#1c1c1c" font-weight="normal" font-family='"Liberation Mono", monospace' text-anchor="middle" textLength="17.13" lengthAdjust="spacingAndGlyphs" stroke="#e3e3e3" stroke-width="0.4">4</text>
<text x="1529.94" y="452.80" font-size="30.05" fill="#1c1c1c" font-weight="normal" font-family='"Liberation Mono", monospace' text-anchor="middle" textLength="17.13" lengthAdjust="spacingAndGlyphs" stroke="#e3e3e3" stroke-width="0.4">3</text>
<text x="1546.57" y="452.80" font-size="30.05" fill="#1c1c1c" font-weight="normal" font-family='"Liberation Mono", monospace' text-anchor="middle" textLength="13.52" lengthAdjust="spacingAndGlyphs" stroke="#e3e3e3" stroke-width="0.4">%</text>
<rect x="1602" y="248" width="304" height="27" fill="#e3e3e3"/>
<rect x="1602" y="275" width="304" height="1" fill="#a3a3a3"/>
<rect x="1602" y="276" width="304" height="187" fill="#e3e3e3"/>
<text x="1610.20" y="266.60" font-size="18.2" fill="#1a1a1a" font-weight="bold" textLength="294.50" lengthAdjust="spacingAndGlyphs">РЕНТАБЕЛЬНОСТЬ СОБСТВЕННОГ...</text>
<text x="1625.06" y="380.80" font-size="39.45" fill="#1c1c1c" font-weight="bold" font-family='"Liberation Mono", monospace' text-anchor="middle" textLength="22.49" lengthAdjust="spacingAndGlyphs" >1</text>
<text x="1646.64" y="380.80" font-size="39.45" fill="#1c1c1c" font-weight="bold" font-family='"Liberation Mono", monospace' text-anchor="middle" textLength="22.49" lengthAdjust="spacingAndGlyphs" >8</text>
<text x="1668.22" y="380.80" font-size="39.45" fill="#1c1c1c" font-weight="bold" font-family='"Liberation Mono", monospace' text-anchor="middle" textLength="22.49" lengthAdjust="spacingAndGlyphs" >5</text>
<text x="1684.34" y="380.80" font-size="39.45" fill="#1c1c1c" font-weight="bold" font-family='"Liberation Mono", monospace' text-anchor="middle" textLength="16.57" lengthAdjust="spacingAndGlyphs" stroke="#1c1c1c" stroke-width="1.30">,</text>
<text x="1700.46" y="380.80" font-size="39.45" fill="#1c1c1c" font-weight="bold" font-family='"Liberation Mono", monospace' text-anchor="middle" textLength="22.49" lengthAdjust="spacingAndGlyphs" >8</text>
<text x="1722.04" y="380.80" font-size="39.45" fill="#1c1c1c" font-weight="bold" font-family='"Liberation Mono", monospace' text-anchor="middle" textLength="22.49" lengthAdjust="spacingAndGlyphs" >1</text>
<text x="1743.88" y="380.80" font-size="39.45" fill="#1c1c1c" font-weight="bold" font-family='"Liberation Mono", monospace' text-anchor="middle" textLength="17.75" lengthAdjust="spacingAndGlyphs" stroke="#1c1c1c" stroke-width="1.30">%</text>
<rect x="1767" y="369" width="139" height="1" fill="#9a9a9a"/>
<polygon points="1781.84,317.90 1801.14,317.90 1791.49,298.90" fill="#52b46c"/>
<text x="1813.51" y="317.90" font-size="29.89" fill="#52b46c" font-weight="bold" font-family='"Liberation Mono", monospace' text-anchor="middle" textLength="17.04" lengthAdjust="spacingAndGlyphs" >2</text>
<text x="1829.86" y="317.90" font-size="29.89" fill="#52b46c" font-weight="bold" font-family='"Liberation Mono", monospace' text-anchor="middle" textLength="17.04" lengthAdjust="spacingAndGlyphs" >7</text>
<text x="1842.08" y="317.90" font-size="29.89" fill="#52b46c" font-weight="bold" font-family='"Liberation Mono", monospace' text-anchor="middle" textLength="12.56" lengthAdjust="spacingAndGlyphs" stroke="#52b46c" stroke-width="0.98">,</text>
<text x="1854.29" y="317.90" font-size="29.89" fill="#52b46c" font-weight="bold" font-family='"Liberation Mono", monospace' text-anchor="middle" textLength="17.04" lengthAdjust="spacingAndGlyphs" >4</text>
<text x="1870.64" y="317.90" font-size="29.89" fill="#52b46c" font-weight="bold" font-family='"Liberation Mono", monospace' text-anchor="middle" textLength="17.04" lengthAdjust="spacingAndGlyphs" >6</text>
<text x="1887.19" y="317.90" font-size="29.89" fill="#52b46c" font-weight="bold" font-family='"Liberation Mono", monospace' text-anchor="middle" textLength="13.45" lengthAdjust="spacingAndGlyphs" stroke="#52b46c" stroke-width="0.98">%</text>
<polygon points="1781.84,412.80 1801.14,412.80 1791.49,393.80" fill="#52b46c"/>
<text x="1813.51" y="412.80" font-size="29.89" fill="#52b46c" font-weight="bold" font-family='"Liberation Mono", monospace' text-anchor="middle" textLength="17.04" lengthAdjust="spacingAndGlyphs" >4</text>
<text x="1829.86" y="412.80" font-size="29.89" fill="#52b46c" font-weight="bold" font-family='"Liberation Mono", monospace' text-anchor="middle" textLength="17.04" lengthAdjust="spacingAndGlyphs" >0</text>
<text x="1842.08" y="412.80" font-size="29.89" fill="#52b46c" font-weight="bold" font-family='"Liberation Mono", monospace' text-anchor="middle" textLength="12.56" lengthAdjust="spacingAndGlyphs" stroke="#52b46c" stroke-width="0.98">,</text>
<text x="1854.29" y="412.80" font-size="29.89" fill="#52b46c" font-weight="bold" font-family='"Liberation Mono", monospace' text-anchor="middle" textLength="17.04" lengthAdjust="spacingAndGlyphs" >9</text>
<text x="1870.64" y="412.80" font-size="29.89" fill="#52b46c" font-weight="bold" font-family='"Liberation Mono", monospace' text-anchor="middle" textLength="17.04" lengthAdjust="spacingAndGlyphs" >7</text>
<text x="1887.19" y="412.80" font-size="29.89" fill="#52b46c" font-weight="bold" font-family='"Liberation Mono", monospace' text-anchor="middle" textLength="13.45" lengthAdjust="spacingAndGlyphs" stroke="#52b46c" stroke-width="0.98">%</text>
<text x="1792.70" y="357.80" font-size="30.05" fill="#1c1c1c" font-weight="normal" font-family='"Liberation Mono", monospace' text-anchor="middle" textLength="17.13" lengthAdjust="spacingAndGlyphs" stroke="#e3e3e3" stroke-width="0.4">1</text>
<text x="1809.13" y="357.80" font-size="30.05" fill="#1c1c1c" font-weight="normal" font-family='"Liberation Mono", monospace' text-anchor="middle" textLength="17.13" lengthAdjust="spacingAndGlyphs" stroke="#e3e3e3" stroke-width="0.4">5</text>
<text x="1825.57" y="357.80" font-size="30.05" fill="#1c1c1c" font-weight="normal" font-family='"Liberation Mono", monospace' text-anchor="middle" textLength="17.13" lengthAdjust="spacingAndGlyphs" stroke="#e3e3e3" stroke-width="0.4">8</text>
<text x="1836.75" y="357.80" font-size="30.05" fill="#1c1c1c" font-weight="normal" font-family='"Liberation Mono", monospace' text-anchor="middle" textLength="9.92" lengthAdjust="spacingAndGlyphs" stroke="#e3e3e3" stroke-width="0.4">,</text>
<text x="1847.94" y="357.80" font-size="30.05" fill="#1c1c1c" font-weight="normal" font-family='"Liberation Mono", monospace' text-anchor="middle" textLength="17.13" lengthAdjust="spacingAndGlyphs" stroke="#e3e3e3" stroke-width="0.4">3</text>
<text x="1864.37" y="357.80" font-size="30.05" fill="#1c1c1c" font-weight="normal" font-family='"Liberation Mono", monospace' text-anchor="middle" textLength="17.13" lengthAdjust="spacingAndGlyphs" stroke="#e3e3e3" stroke-width="0.4">6</text>
<text x="1881.00" y="357.80" font-size="30.05" fill="#1c1c1c" font-weight="normal" font-family='"Liberation Mono", monospace' text-anchor="middle" textLength="13.52" lengthAdjust="spacingAndGlyphs" stroke="#e3e3e3" stroke-width="0.4">%</text>
<text x="1792.70" y="452.80" font-size="30.05" fill="#1c1c1c" font-weight="normal" font-family='"Liberation Mono", monospace' text-anchor="middle" textLength="17.13" lengthAdjust="spacingAndGlyphs" stroke="#e3e3e3" stroke-width="0.4">1</text>
<text x="1809.13" y="452.80" font-size="30.05" fill="#1c1c1c" font-weight="normal" font-family='"Liberation Mono", monospace' text-anchor="middle" textLength="17.13" lengthAdjust="spacingAndGlyphs" stroke="#e3e3e3" stroke-width="0.4">4</text>
<text x="1825.57" y="452.80" font-size="30.05" fill="#1c1c1c" font-weight="normal" font-family='"Liberation Mono", monospace' text-anchor="middle" textLength="17.13" lengthAdjust="spacingAndGlyphs" stroke="#e3e3e3" stroke-width="0.4">4</text>
<text x="1836.75" y="452.80" font-size="30.05" fill="#1c1c1c" font-weight="normal" font-family='"Liberation Mono", monospace' text-anchor="middle" textLength="9.92" lengthAdjust="spacingAndGlyphs" stroke="#e3e3e3" stroke-width="0.4">,</text>
<text x="1847.94" y="452.80" font-size="30.05" fill="#1c1c1c" font-weight="normal" font-family='"Liberation Mono", monospace' text-anchor="middle" textLength="17.13" lengthAdjust="spacingAndGlyphs" stroke="#e3e3e3" stroke-width="0.4">8</text>
<text x="1864.37" y="452.80" font-size="30.05" fill="#1c1c1c" font-weight="normal" font-family='"Liberation Mono", monospace' text-anchor="middle" textLength="17.13" lengthAdjust="spacingAndGlyphs" stroke="#e3e3e3" stroke-width="0.4">5</text>
<text x="1881.00" y="452.80" font-size="30.05" fill="#1c1c1c" font-weight="normal" font-family='"Liberation Mono", monospace' text-anchor="middle" textLength="13.52" lengthAdjust="spacingAndGlyphs" stroke="#e3e3e3" stroke-width="0.4">%</text>
<rect x="1300.3" y="310.3" width="133.7" height="34.4" rx="4" fill="#4e4e4e"/>
<polygon points="1357.5,344.6 1375.5,344.6 1366.5,354" fill="#4e4e4e"/>
<text x="1312.30" y="332.10" font-size="15.8" fill="#ffffff" textLength="109.40" lengthAdjust="spacingAndGlyphs">Факт за период</text>
<defs><linearGradient id="rs" x1="0" y1="0" x2="1" y2="0"><stop offset="0" stop-color="#f4f4f4" stop-opacity="0"/><stop offset="1" stop-color="#f5f5f5" stop-opacity="1"/></linearGradient></defs>
<rect x="930" y="500.5" width="22" height="166" fill="url(#rs)"/>
<line x1="79" y1="500.5" x2="952" y2="500.5" stroke="#d9d9d9" stroke-width="1.2" />
<line x1="79" y1="591" x2="952" y2="591" stroke="#d9d9d9" stroke-width="1.2" />
<line x1="79" y1="666.3" x2="952" y2="666.3" stroke="#d0d0d0" stroke-width="1.4" />
<line x1="89" y1="500" x2="89" y2="666.5" stroke="#d9d9d9" stroke-width="1.2" />
<text x="30.56" y="506.80" font-size="16.39" fill="#7a7a7a" font-weight="normal" font-family='"Liberation Mono", monospace' text-anchor="middle" textLength="9.34" lengthAdjust="spacingAndGlyphs" >1</text>
<text x="39.53" y="506.80" font-size="16.39" fill="#7a7a7a" font-weight="normal" font-family='"Liberation Mono", monospace' text-anchor="middle" textLength="9.34" lengthAdjust="spacingAndGlyphs" >0</text>
<text x="45.63" y="506.80" font-size="16.39" fill="#7a7a7a" font-weight="normal" font-family='"Liberation Mono", monospace' text-anchor="middle" textLength="5.41" lengthAdjust="spacingAndGlyphs" >,</text>
<text x="51.73" y="506.80" font-size="16.39" fill="#7a7a7a" font-weight="normal" font-family='"Liberation Mono", monospace' text-anchor="middle" textLength="9.34" lengthAdjust="spacingAndGlyphs" >0</text>
<text x="60.69" y="506.80" font-size="16.39" fill="#7a7a7a" font-weight="normal" font-family='"Liberation Mono", monospace' text-anchor="middle" textLength="9.34" lengthAdjust="spacingAndGlyphs" >0</text>
<text x="69.77" y="506.80" font-size="16.39" fill="#7a7a7a" font-weight="normal" font-family='"Liberation Mono", monospace' text-anchor="middle" textLength="7.37" lengthAdjust="spacingAndGlyphs" >%</text>
<text x="39.53" y="597.30" font-size="16.39" fill="#7a7a7a" font-weight="normal" font-family='"Liberation Mono", monospace' text-anchor="middle" textLength="9.34" lengthAdjust="spacingAndGlyphs" >7</text>
<text x="45.63" y="597.30" font-size="16.39" fill="#7a7a7a" font-weight="normal" font-family='"Liberation Mono", monospace' text-anchor="middle" textLength="5.41" lengthAdjust="spacingAndGlyphs" >,</text>
<text x="51.73" y="597.30" font-size="16.39" fill="#7a7a7a" font-weight="normal" font-family='"Liberation Mono", monospace' text-anchor="middle" textLength="9.34" lengthAdjust="spacingAndGlyphs" >0</text>
<text x="60.69" y="597.30" font-size="16.39" fill="#7a7a7a" font-weight="normal" font-family='"Liberation Mono", monospace' text-anchor="middle" textLength="9.34" lengthAdjust="spacingAndGlyphs" >0</text>
<text x="69.77" y="597.30" font-size="16.39" fill="#7a7a7a" font-weight="normal" font-family='"Liberation Mono", monospace' text-anchor="middle" textLength="7.37" lengthAdjust="spacingAndGlyphs" >%</text>
<text x="39.53" y="672.60" font-size="16.39" fill="#7a7a7a" font-weight="normal" font-family='"Liberation Mono", monospace' text-anchor="middle" textLength="9.34" lengthAdjust="spacingAndGlyphs" >4</text>
<text x="45.63" y="672.60" font-size="16.39" fill="#7a7a7a" font-weight="normal" font-family='"Liberation Mono", monospace' text-anchor="middle" textLength="5.41" lengthAdjust="spacingAndGlyphs" >,</text>
<text x="51.73" y="672.60" font-size="16.39" fill="#7a7a7a" font-weight="normal" font-family='"Liberation Mono", monospace' text-anchor="middle" textLength="9.34" lengthAdjust="spacingAndGlyphs" >5</text>
<text x="60.69" y="672.60" font-size="16.39" fill="#7a7a7a" font-weight="normal" font-family='"Liberation Mono", monospace' text-anchor="middle" textLength="9.34" lengthAdjust="spacingAndGlyphs" >0</text>
<text x="69.77" y="672.60" font-size="16.39" fill="#7a7a7a" font-weight="normal" font-family='"Liberation Mono", monospace' text-anchor="middle" textLength="7.37" lengthAdjust="spacingAndGlyphs" >%</text>
<line x1="79" y1="500.5" x2="89" y2="500.5" stroke="#d9d9d9" stroke-width="1.2" />
<line x1="79" y1="591" x2="89" y2="591" stroke="#d9d9d9" stroke-width="1.2" />
<line x1="79" y1="666.3" x2="89" y2="666.3" stroke="#d9d9d9" stroke-width="1.2" />
<polyline points="125.80,664.09 197.65,644.19 269.50,566.42 341.35,550.74 413.20,544.41 485.05,540.19 556.90,541.70 628.75,543.51 700.60,546.52 772.45,554.66 844.30,557.68 916.15,557.68" fill="none" stroke="#cc6677" stroke-width="1.4"/>
<polyline points="125.80,626.41 197.65,585.41 269.50,551.95 341.35,547.73 413.20,551.65 485.05,548.33 556.90,555.57 628.75,560.39 700.60,556.47 772.45,546.82 844.30,534.77 916.15,512.16" fill="none" stroke="#4477aa" stroke-width="1.4"/>
<circle cx="125.80" cy="664.09" r="3.6" fill="#cc6677"/>
<circle cx="197.65" cy="644.19" r="3.6" fill="#cc6677"/>
<circle cx="269.50" cy="566.42" r="3.6" fill="#cc6677"/>
<circle cx="341.35" cy="550.74" r="3.6" fill="#cc6677"/>
<circle cx="413.20" cy="544.41" r="3.6" fill="#cc6677"/>
<circle cx="485.05" cy="540.19" r="3.6" fill="#cc6677"/>
<circle cx="556.90" cy="541.70" r="3.6" fill="#cc6677"/>
<circle cx="628.75" cy="543.51" r="3.6" fill="#cc6677"/>
<circle cx="700.60" cy="546.52" r="3.6" fill="#cc6677"/>
<circle cx="772.45" cy="554.66" r="3.6" fill="#cc6677"/>
<circle cx="844.30" cy="557.68" r="3.6" fill="#cc6677"/>
<circle cx="916.15" cy="557.68" r="3.6" fill="#cc6677"/>
<circle cx="125.80" cy="626.41" r="3.6" fill="#4477aa"/>
<circle cx="197.65" cy="585.41" r="3.6" fill="#4477aa"/>
<circle cx="269.50" cy="551.95" r="3.6" fill="#4477aa"/>
<circle cx="341.35" cy="547.73" r="3.6" fill="#4477aa"/>
<circle cx="413.20" cy="551.65" r="3.6" fill="#4477aa"/>
<circle cx="485.05" cy="548.33" r="3.6" fill="#4477aa"/>
<circle cx="556.90" cy="555.57" r="3.6" fill="#4477aa"/>
<circle cx="628.75" cy="560.39" r="3.6" fill="#4477aa"/>
<circle cx="700.60" cy="556.47" r="3.6" fill="#4477aa"/>
<circle cx="772.45" cy="546.82" r="3.6" fill="#4477aa"/>
<circle cx="844.30" cy="534.77" r="3.6" fill="#4477aa"/>
<circle cx="916.15" cy="512.16" r="3.6" fill="#4477aa"/>
<text x="163.79" y="576.30" font-size="16.69" fill="#5a5a5a" font-weight="normal" font-family='"Liberation Mono", monospace' text-anchor="middle" textLength="9.51" lengthAdjust="spacingAndGlyphs" >7</text>
<text x="170.01" y="576.30" font-size="16.69" fill="#5a5a5a" font-weight="normal" font-family='"Liberation Mono", monospace' text-anchor="middle" textLength="5.51" lengthAdjust="spacingAndGlyphs" >,</text>
<text x="176.22" y="576.30" font-size="16.69" fill="#5a5a5a" font-weight="normal" font-family='"Liberation Mono", monospace' text-anchor="middle" textLength="9.51" lengthAdjust="spacingAndGlyphs" >1</text>
<text x="185.35" y="576.30" font-size="16.69" fill="#5a5a5a" font-weight="normal" font-family='"Liberation Mono", monospace' text-anchor="middle" textLength="9.51" lengthAdjust="spacingAndGlyphs" >8</text>
<text x="194.59" y="576.30" font-size="16.69" fill="#5a5a5a" font-weight="normal" font-family='"Liberation Mono", monospace' text-anchor="middle" textLength="7.51" lengthAdjust="spacingAndGlyphs" >%</text>
<text x="161.79" y="635.00" font-size="16.69" fill="#5a5a5a" font-weight="normal" font-family='"Liberation Mono", monospace' text-anchor="middle" textLength="9.51" lengthAdjust="spacingAndGlyphs" >5</text>
<text x="168.01" y="635.00" font-size="16.69" fill="#5a5a5a" font-weight="normal" font-family='"Liberation Mono", monospace' text-anchor="middle" textLength="5.51" lengthAdjust="spacingAndGlyphs" >,</text>
<text x="174.22" y="635.00" font-size="16.69" fill="#5a5a5a" font-weight="normal" font-family='"Liberation Mono", monospace' text-anchor="middle" textLength="9.51" lengthAdjust="spacingAndGlyphs" >2</text>
<text x="183.35" y="635.00" font-size="16.69" fill="#5a5a5a" font-weight="normal" font-family='"Liberation Mono", monospace' text-anchor="middle" textLength="9.51" lengthAdjust="spacingAndGlyphs" >3</text>
<text x="192.59" y="635.00" font-size="16.69" fill="#5a5a5a" font-weight="normal" font-family='"Liberation Mono", monospace' text-anchor="middle" textLength="7.51" lengthAdjust="spacingAndGlyphs" >%</text>
<text x="110.80" y="646.20" font-size="16.69" fill="#5a5a5a" font-weight="normal" font-family='"Liberation Mono", monospace' text-anchor="middle" textLength="9.51" lengthAdjust="spacingAndGlyphs" >5</text>
<text x="117.01" y="646.20" font-size="16.69" fill="#5a5a5a" font-weight="normal" font-family='"Liberation Mono", monospace' text-anchor="middle" textLength="5.51" lengthAdjust="spacingAndGlyphs" >,</text>
<text x="123.22" y="646.20" font-size="16.69" fill="#5a5a5a" font-weight="normal" font-family='"Liberation Mono", monospace' text-anchor="middle" textLength="9.51" lengthAdjust="spacingAndGlyphs" >8</text>
<text x="132.35" y="646.20" font-size="16.69" fill="#5a5a5a" font-weight="normal" font-family='"Liberation Mono", monospace' text-anchor="middle" textLength="9.51" lengthAdjust="spacingAndGlyphs" >2</text>
<text x="141.59" y="646.20" font-size="16.69" fill="#5a5a5a" font-weight="normal" font-family='"Liberation Mono", monospace' text-anchor="middle" textLength="7.51" lengthAdjust="spacingAndGlyphs" >%</text>
<text x="254.29" y="543.80" font-size="16.69" fill="#5a5a5a" font-weight="normal" font-family='"Liberation Mono", monospace' text-anchor="middle" textLength="9.51" lengthAdjust="spacingAndGlyphs" >8</text>
<text x="260.51" y="543.80" font-size="16.69" fill="#5a5a5a" font-weight="normal" font-family='"Liberation Mono", monospace' text-anchor="middle" textLength="5.51" lengthAdjust="spacingAndGlyphs" >,</text>
<text x="266.73" y="543.80" font-size="16.69" fill="#5a5a5a" font-weight="normal" font-family='"Liberation Mono", monospace' text-anchor="middle" textLength="9.51" lengthAdjust="spacingAndGlyphs" >2</text>
<text x="275.86" y="543.80" font-size="16.69" fill="#5a5a5a" font-weight="normal" font-family='"Liberation Mono", monospace' text-anchor="middle" textLength="9.51" lengthAdjust="spacingAndGlyphs" >9</text>
<text x="285.10" y="543.80" font-size="16.69" fill="#5a5a5a" font-weight="normal" font-family='"Liberation Mono", monospace' text-anchor="middle" textLength="7.51" lengthAdjust="spacingAndGlyphs" >%</text>
<text x="275.80" y="586.30" font-size="16.69" fill="#5a5a5a" font-weight="normal" font-family='"Liberation Mono", monospace' text-anchor="middle" textLength="9.51" lengthAdjust="spacingAndGlyphs" >7</text>
<text x="282.01" y="586.30" font-size="16.69" fill="#5a5a5a" font-weight="normal" font-family='"Liberation Mono", monospace' text-anchor="middle" textLength="5.51" lengthAdjust="spacingAndGlyphs" >,</text>
<text x="288.23" y="586.30" font-size="16.69" fill="#5a5a5a" font-weight="normal" font-family='"Liberation Mono", monospace' text-anchor="middle" textLength="9.51" lengthAdjust="spacingAndGlyphs" >8</text>
<text x="297.36" y="586.30" font-size="16.69" fill="#5a5a5a" font-weight="normal" font-family='"Liberation Mono", monospace' text-anchor="middle" textLength="9.51" lengthAdjust="spacingAndGlyphs" >1</text>
<text x="306.60" y="586.30" font-size="16.69" fill="#5a5a5a" font-weight="normal" font-family='"Liberation Mono", monospace' text-anchor="middle" textLength="7.51" lengthAdjust="spacingAndGlyphs" >%</text>
<text x="326.30" y="539.50" font-size="16.69" fill="#5a5a5a" font-weight="normal" font-family='"Liberation Mono", monospace' text-anchor="middle" textLength="9.51" lengthAdjust="spacingAndGlyphs" >8</text>
<text x="332.51" y="539.50" font-size="16.69" fill="#5a5a5a" font-weight="normal" font-family='"Liberation Mono", monospace' text-anchor="middle" textLength="5.51" lengthAdjust="spacingAndGlyphs" >,</text>
<text x="338.73" y="539.50" font-size="16.69" fill="#5a5a5a" font-weight="normal" font-family='"Liberation Mono", monospace' text-anchor="middle" textLength="9.51" lengthAdjust="spacingAndGlyphs" >4</text>
<text x="347.86" y="539.50" font-size="16.69" fill="#5a5a5a" font-weight="normal" font-family='"Liberation Mono", monospace' text-anchor="middle" textLength="9.51" lengthAdjust="spacingAndGlyphs" >3</text>
<text x="357.10" y="539.50" font-size="16.69" fill="#5a5a5a" font-weight="normal" font-family='"Liberation Mono", monospace' text-anchor="middle" textLength="7.51" lengthAdjust="spacingAndGlyphs" >%</text>
<text x="347.50" y="570.50" font-size="16.69" fill="#5a5a5a" font-weight="normal" font-family='"Liberation Mono", monospace' text-anchor="middle" textLength="9.51" lengthAdjust="spacingAndGlyphs" >8</text>
<text x="353.71" y="570.50" font-size="16.69" fill="#5a5a5a" font-weight="normal" font-family='"Liberation Mono", monospace' text-anchor="middle" textLength="5.51" lengthAdjust="spacingAndGlyphs" >,</text>
<text x="359.93" y="570.50" font-size="16.69" fill="#5a5a5a" font-weight="normal" font-family='"Liberation Mono", monospace' text-anchor="middle" textLength="9.51" lengthAdjust="spacingAndGlyphs" >3</text>
<text x="369.06" y="570.50" font-size="16.69" fill="#5a5a5a" font-weight="normal" font-family='"Liberation Mono", monospace' text-anchor="middle" textLength="9.51" lengthAdjust="spacingAndGlyphs" >3</text>
<text x="378.30" y="570.50" font-size="16.69" fill="#5a5a5a" font-weight="normal" font-family='"Liberation Mono", monospace' text-anchor="middle" textLength="7.51" lengthAdjust="spacingAndGlyphs" >%</text>
<text x="398.30" y="535.50" font-size="16.69" fill="#5a5a5a" font-weight="normal" font-family='"Liberation Mono", monospace' text-anchor="middle" textLength="9.51" lengthAdjust="spacingAndGlyphs" >8</text>
<text x="404.51" y="535.50" font-size="16.69" fill="#5a5a5a" font-weight="normal" font-family='"Liberation Mono", monospace' text-anchor="middle" textLength="5.51" lengthAdjust="spacingAndGlyphs" >,</text>
<text x="410.73" y="535.50" font-size="16.69" fill="#5a5a5a" font-weight="normal" font-family='"Liberation Mono", monospace' text-anchor="middle" textLength="9.51" lengthAdjust="spacingAndGlyphs" >5</text>
<text x="419.86" y="535.50" font-size="16.69" fill="#5a5a5a" font-weight="normal" font-family='"Liberation Mono", monospace' text-anchor="middle" textLength="9.51" lengthAdjust="spacingAndGlyphs" >4</text>
<text x="429.10" y="535.50" font-size="16.69" fill="#5a5a5a" font-weight="normal" font-family='"Liberation Mono", monospace' text-anchor="middle" textLength="7.51" lengthAdjust="spacingAndGlyphs" >%</text>
<text x="398.30" y="571.30" font-size="16.69" fill="#5a5a5a" font-weight="normal" font-family='"Liberation Mono", monospace' text-anchor="middle" textLength="9.51" lengthAdjust="spacingAndGlyphs" >8</text>
<text x="404.51" y="571.30" font-size="16.69" fill="#5a5a5a" font-weight="normal" font-family='"Liberation Mono", monospace' text-anchor="middle" textLength="5.51" lengthAdjust="spacingAndGlyphs" >,</text>
<text x="410.73" y="571.30" font-size="16.69" fill="#5a5a5a" font-weight="normal" font-family='"Liberation Mono", monospace' text-anchor="middle" textLength="9.51" lengthAdjust="spacingAndGlyphs" >3</text>
<text x="419.86" y="571.30" font-size="16.69" fill="#5a5a5a" font-weight="normal" font-family='"Liberation Mono", monospace' text-anchor="middle" textLength="9.51" lengthAdjust="spacingAndGlyphs" >0</text>
<text x="429.10" y="571.30" font-size="16.69" fill="#5a5a5a" font-weight="normal" font-family='"Liberation Mono", monospace' text-anchor="middle" textLength="7.51" lengthAdjust="spacingAndGlyphs" >%</text>
<text x="470.10" y="531.30" font-size="16.69" fill="#5a5a5a" font-weight="normal" font-family='"Liberation Mono", monospace' text-anchor="middle" textLength="9.51" lengthAdjust="spacingAndGlyphs" >8</text>
<text x="476.31" y="531.30" font-size="16.69" fill="#5a5a5a" font-weight="normal" font-family='"Liberation Mono", monospace' text-anchor="middle" textLength="5.51" lengthAdjust="spacingAndGlyphs" >,</text>
<text x="482.53" y="531.30" font-size="16.69" fill="#5a5a5a" font-weight="normal" font-family='"Liberation Mono", monospace' text-anchor="middle" textLength="9.51" lengthAdjust="spacingAndGlyphs" >6</text>
<text x="491.66" y="531.30" font-size="16.69" fill="#5a5a5a" font-weight="normal" font-family='"Liberation Mono", monospace' text-anchor="middle" textLength="9.51" lengthAdjust="spacingAndGlyphs" >8</text>
<text x="500.90" y="531.30" font-size="16.69" fill="#5a5a5a" font-weight="normal" font-family='"Liberation Mono", monospace' text-anchor="middle" textLength="7.51" lengthAdjust="spacingAndGlyphs" >%</text>
<text x="491.19" y="568.30" font-size="16.69" fill="#5a5a5a" font-weight="normal" font-family='"Liberation Mono", monospace' text-anchor="middle" textLength="9.51" lengthAdjust="spacingAndGlyphs" >8</text>
<text x="497.41" y="568.30" font-size="16.69" fill="#5a5a5a" font-weight="normal" font-family='"Liberation Mono", monospace' text-anchor="middle" textLength="5.51" lengthAdjust="spacingAndGlyphs" >,</text>
<text x="503.62" y="568.30" font-size="16.69" fill="#5a5a5a" font-weight="normal" font-family='"Liberation Mono", monospace' text-anchor="middle" textLength="9.51" lengthAdjust="spacingAndGlyphs" >4</text>
<text x="512.75" y="568.30" font-size="16.69" fill="#5a5a5a" font-weight="normal" font-family='"Liberation Mono", monospace' text-anchor="middle" textLength="9.51" lengthAdjust="spacingAndGlyphs" >1</text>
<text x="522.00" y="568.30" font-size="16.69" fill="#5a5a5a" font-weight="normal" font-family='"Liberation Mono", monospace' text-anchor="middle" textLength="7.51" lengthAdjust="spacingAndGlyphs" >%</text>
<text x="541.40" y="533.30" font-size="16.69" fill="#5a5a5a" font-weight="normal" font-family='"Liberation Mono", monospace' text-anchor="middle" textLength="9.51" lengthAdjust="spacingAndGlyphs" >8</text>
<text x="547.61" y="533.30" font-size="16.69" fill="#5a5a5a" font-weight="normal" font-family='"Liberation Mono", monospace' text-anchor="middle" textLength="5.51" lengthAdjust="spacingAndGlyphs" >,</text>
<text x="553.83" y="533.30" font-size="16.69" fill="#5a5a5a" font-weight="normal" font-family='"Liberation Mono", monospace' text-anchor="middle" textLength="9.51" lengthAdjust="spacingAndGlyphs" >6</text>
<text x="562.96" y="533.30" font-size="16.69" fill="#5a5a5a" font-weight="normal" font-family='"Liberation Mono", monospace' text-anchor="middle" textLength="9.51" lengthAdjust="spacingAndGlyphs" >3</text>
<text x="572.19" y="533.30" font-size="16.69" fill="#5a5a5a" font-weight="normal" font-family='"Liberation Mono", monospace' text-anchor="middle" textLength="7.51" lengthAdjust="spacingAndGlyphs" >%</text>
<text x="563.10" y="574.60" font-size="16.69" fill="#5a5a5a" font-weight="normal" font-family='"Liberation Mono", monospace' text-anchor="middle" textLength="9.51" lengthAdjust="spacingAndGlyphs" >8</text>
<text x="569.31" y="574.60" font-size="16.69" fill="#5a5a5a" font-weight="normal" font-family='"Liberation Mono", monospace' text-anchor="middle" textLength="5.51" lengthAdjust="spacingAndGlyphs" >,</text>
<text x="575.52" y="574.60" font-size="16.69" fill="#5a5a5a" font-weight="normal" font-family='"Liberation Mono", monospace' text-anchor="middle" textLength="9.51" lengthAdjust="spacingAndGlyphs" >1</text>
<text x="584.65" y="574.60" font-size="16.69" fill="#5a5a5a" font-weight="normal" font-family='"Liberation Mono", monospace' text-anchor="middle" textLength="9.51" lengthAdjust="spacingAndGlyphs" >7</text>
<text x="593.89" y="574.60" font-size="16.69" fill="#5a5a5a" font-weight="normal" font-family='"Liberation Mono", monospace' text-anchor="middle" textLength="7.51" lengthAdjust="spacingAndGlyphs" >%</text>
<text x="613.70" y="534.30" font-size="16.69" fill="#5a5a5a" font-weight="normal" font-family='"Liberation Mono", monospace' text-anchor="middle" textLength="9.51" lengthAdjust="spacingAndGlyphs" >8</text>
<text x="619.91" y="534.30" font-size="16.69" fill="#5a5a5a" font-weight="normal" font-family='"Liberation Mono", monospace' text-anchor="middle" textLength="5.51" lengthAdjust="spacingAndGlyphs" >,</text>
<text x="626.12" y="534.30" font-size="16.69" fill="#5a5a5a" font-weight="normal" font-family='"Liberation Mono", monospace' text-anchor="middle" textLength="9.51" lengthAdjust="spacingAndGlyphs" >5</text>
<text x="635.25" y="534.30" font-size="16.69" fill="#5a5a5a" font-weight="normal" font-family='"Liberation Mono", monospace' text-anchor="middle" textLength="9.51" lengthAdjust="spacingAndGlyphs" >7</text>
<text x="644.49" y="534.30" font-size="16.69" fill="#5a5a5a" font-weight="normal" font-family='"Liberation Mono", monospace' text-anchor="middle" textLength="7.51" lengthAdjust="spacingAndGlyphs" >%</text>
<text x="613.70" y="579.70" font-size="16.69" fill="#5a5a5a" font-weight="normal" font-family='"Liberation Mono", monospace' text-anchor="middle" textLength="9.51" lengthAdjust="spacingAndGlyphs" >8</text>
<text x="619.91" y="579.70" font-size="16.69" fill="#5a5a5a" font-weight="normal" font-family='"Liberation Mono", monospace' text-anchor="middle" textLength="5.51" lengthAdjust="spacingAndGlyphs" >,</text>
<text x="626.12" y="579.70" font-size="16.69" fill="#5a5a5a" font-weight="normal" font-family='"Liberation Mono", monospace' text-anchor="middle" textLength="9.51" lengthAdjust="spacingAndGlyphs" >0</text>
<text x="635.25" y="579.70" font-size="16.69" fill="#5a5a5a" font-weight="normal" font-family='"Liberation Mono", monospace' text-anchor="middle" textLength="9.51" lengthAdjust="spacingAndGlyphs" >1</text>
<text x="644.49" y="579.70" font-size="16.69" fill="#5a5a5a" font-weight="normal" font-family='"Liberation Mono", monospace' text-anchor="middle" textLength="7.51" lengthAdjust="spacingAndGlyphs" >%</text>
<text x="685.60" y="537.60" font-size="16.69" fill="#5a5a5a" font-weight="normal" font-family='"Liberation Mono", monospace' text-anchor="middle" textLength="9.51" lengthAdjust="spacingAndGlyphs" >8</text>
<text x="691.81" y="537.60" font-size="16.69" fill="#5a5a5a" font-weight="normal" font-family='"Liberation Mono", monospace' text-anchor="middle" textLength="5.51" lengthAdjust="spacingAndGlyphs" >,</text>
<text x="698.02" y="537.60" font-size="16.69" fill="#5a5a5a" font-weight="normal" font-family='"Liberation Mono", monospace' text-anchor="middle" textLength="9.51" lengthAdjust="spacingAndGlyphs" >4</text>
<text x="707.15" y="537.60" font-size="16.69" fill="#5a5a5a" font-weight="normal" font-family='"Liberation Mono", monospace' text-anchor="middle" textLength="9.51" lengthAdjust="spacingAndGlyphs" >7</text>
<text x="716.39" y="537.60" font-size="16.69" fill="#5a5a5a" font-weight="normal" font-family='"Liberation Mono", monospace' text-anchor="middle" textLength="7.51" lengthAdjust="spacingAndGlyphs" >%</text>
<text x="706.60" y="575.90" font-size="16.69" fill="#5a5a5a" font-weight="normal" font-family='"Liberation Mono", monospace' text-anchor="middle" textLength="9.51" lengthAdjust="spacingAndGlyphs" >8</text>
<text x="712.81" y="575.90" font-size="16.69" fill="#5a5a5a" font-weight="normal" font-family='"Liberation Mono", monospace' text-anchor="middle" textLength="5.51" lengthAdjust="spacingAndGlyphs" >,</text>
<text x="719.02" y="575.90" font-size="16.69" fill="#5a5a5a" font-weight="normal" font-family='"Liberation Mono", monospace' text-anchor="middle" textLength="9.51" lengthAdjust="spacingAndGlyphs" >1</text>
<text x="728.15" y="575.90" font-size="16.69" fill="#5a5a5a" font-weight="normal" font-family='"Liberation Mono", monospace' text-anchor="middle" textLength="9.51" lengthAdjust="spacingAndGlyphs" >4</text>
<text x="737.39" y="575.90" font-size="16.69" fill="#5a5a5a" font-weight="normal" font-family='"Liberation Mono", monospace' text-anchor="middle" textLength="7.51" lengthAdjust="spacingAndGlyphs" >%</text>
<text x="757.60" y="538.40" font-size="16.69" fill="#5a5a5a" font-weight="normal" font-family='"Liberation Mono", monospace' text-anchor="middle" textLength="9.51" lengthAdjust="spacingAndGlyphs" >8</text>
<text x="763.81" y="538.40" font-size="16.69" fill="#5a5a5a" font-weight="normal" font-family='"Liberation Mono", monospace' text-anchor="middle" textLength="5.51" lengthAdjust="spacingAndGlyphs" >,</text>
<text x="770.02" y="538.40" font-size="16.69" fill="#5a5a5a" font-weight="normal" font-family='"Liberation Mono", monospace' text-anchor="middle" textLength="9.51" lengthAdjust="spacingAndGlyphs" >4</text>
<text x="779.15" y="538.40" font-size="16.69" fill="#5a5a5a" font-weight="normal" font-family='"Liberation Mono", monospace' text-anchor="middle" textLength="9.51" lengthAdjust="spacingAndGlyphs" >6</text>
<text x="788.39" y="538.40" font-size="16.69" fill="#5a5a5a" font-weight="normal" font-family='"Liberation Mono", monospace' text-anchor="middle" textLength="7.51" lengthAdjust="spacingAndGlyphs" >%</text>
<text x="778.30" y="574.10" font-size="16.69" fill="#5a5a5a" font-weight="normal" font-family='"Liberation Mono", monospace' text-anchor="middle" textLength="9.51" lengthAdjust="spacingAndGlyphs" >8</text>
<text x="784.51" y="574.10" font-size="16.69" fill="#5a5a5a" font-weight="normal" font-family='"Liberation Mono", monospace' text-anchor="middle" textLength="5.51" lengthAdjust="spacingAndGlyphs" >,</text>
<text x="790.73" y="574.10" font-size="16.69" fill="#5a5a5a" font-weight="normal" font-family='"Liberation Mono", monospace' text-anchor="middle" textLength="9.51" lengthAdjust="spacingAndGlyphs" >2</text>
<text x="799.86" y="574.10" font-size="16.69" fill="#5a5a5a" font-weight="normal" font-family='"Liberation Mono", monospace' text-anchor="middle" textLength="9.51" lengthAdjust="spacingAndGlyphs" >0</text>
<text x="809.09" y="574.10" font-size="16.69" fill="#5a5a5a" font-weight="normal" font-family='"Liberation Mono", monospace' text-anchor="middle" textLength="7.51" lengthAdjust="spacingAndGlyphs" >%</text>
<text x="808.20" y="525.60" font-size="16.69" fill="#5a5a5a" font-weight="normal" font-family='"Liberation Mono", monospace' text-anchor="middle" textLength="9.51" lengthAdjust="spacingAndGlyphs" >8</text>
<text x="814.41" y="525.60" font-size="16.69" fill="#5a5a5a" font-weight="normal" font-family='"Liberation Mono", monospace' text-anchor="middle" textLength="5.51" lengthAdjust="spacingAndGlyphs" >,</text>
<text x="820.62" y="525.60" font-size="16.69" fill="#5a5a5a" font-weight="normal" font-family='"Liberation Mono", monospace' text-anchor="middle" textLength="9.51" lengthAdjust="spacingAndGlyphs" >8</text>
<text x="829.75" y="525.60" font-size="16.69" fill="#5a5a5a" font-weight="normal" font-family='"Liberation Mono", monospace' text-anchor="middle" textLength="9.51" lengthAdjust="spacingAndGlyphs" >6</text>
<text x="838.99" y="525.60" font-size="16.69" fill="#5a5a5a" font-weight="normal" font-family='"Liberation Mono", monospace' text-anchor="middle" textLength="7.51" lengthAdjust="spacingAndGlyphs" >%</text>
<text x="829.80" y="547.80" font-size="16.69" fill="#5a5a5a" font-weight="normal" font-family='"Liberation Mono", monospace' text-anchor="middle" textLength="9.51" lengthAdjust="spacingAndGlyphs" >8</text>
<text x="836.01" y="547.80" font-size="16.69" fill="#5a5a5a" font-weight="normal" font-family='"Liberation Mono", monospace' text-anchor="middle" textLength="5.51" lengthAdjust="spacingAndGlyphs" >,</text>
<text x="842.23" y="547.80" font-size="16.69" fill="#5a5a5a" font-weight="normal" font-family='"Liberation Mono", monospace' text-anchor="middle" textLength="9.51" lengthAdjust="spacingAndGlyphs" >1</text>
<text x="851.36" y="547.80" font-size="16.69" fill="#5a5a5a" font-weight="normal" font-family='"Liberation Mono", monospace' text-anchor="middle" textLength="9.51" lengthAdjust="spacingAndGlyphs" >0</text>
<text x="860.59" y="547.80" font-size="16.69" fill="#5a5a5a" font-weight="normal" font-family='"Liberation Mono", monospace' text-anchor="middle" textLength="7.51" lengthAdjust="spacingAndGlyphs" >%</text>
<text x="901.30" y="503.20" font-size="16.69" fill="#5a5a5a" font-weight="normal" font-family='"Liberation Mono", monospace' text-anchor="middle" textLength="9.51" lengthAdjust="spacingAndGlyphs" >9</text>
<text x="907.51" y="503.20" font-size="16.69" fill="#5a5a5a" font-weight="normal" font-family='"Liberation Mono", monospace' text-anchor="middle" textLength="5.51" lengthAdjust="spacingAndGlyphs" >,</text>
<text x="913.73" y="503.20" font-size="16.69" fill="#5a5a5a" font-weight="normal" font-family='"Liberation Mono", monospace' text-anchor="middle" textLength="9.51" lengthAdjust="spacingAndGlyphs" >6</text>
<text x="922.86" y="503.20" font-size="16.69" fill="#5a5a5a" font-weight="normal" font-family='"Liberation Mono", monospace' text-anchor="middle" textLength="9.51" lengthAdjust="spacingAndGlyphs" >1</text>
<text x="932.09" y="503.20" font-size="16.69" fill="#5a5a5a" font-weight="normal" font-family='"Liberation Mono", monospace' text-anchor="middle" textLength="7.51" lengthAdjust="spacingAndGlyphs" >%</text>
<text x="902.10" y="549.10" font-size="16.69" fill="#5a5a5a" font-weight="normal" font-family='"Liberation Mono", monospace' text-anchor="middle" textLength="9.51" lengthAdjust="spacingAndGlyphs" >8</text>
<text x="908.31" y="549.10" font-size="16.69" fill="#5a5a5a" font-weight="normal" font-family='"Liberation Mono", monospace' text-anchor="middle" textLength="5.51" lengthAdjust="spacingAndGlyphs" >,</text>
<text x="914.52" y="549.10" font-size="16.69" fill="#5a5a5a" font-weight="normal" font-family='"Liberation Mono", monospace' text-anchor="middle" textLength="9.51" lengthAdjust="spacingAndGlyphs" >1</text>
<text x="923.65" y="549.10" font-size="16.69" fill="#5a5a5a" font-weight="normal" font-family='"Liberation Mono", monospace' text-anchor="middle" textLength="9.51" lengthAdjust="spacingAndGlyphs" >0</text>
<text x="932.89" y="549.10" font-size="16.69" fill="#5a5a5a" font-weight="normal" font-family='"Liberation Mono", monospace' text-anchor="middle" textLength="7.51" lengthAdjust="spacingAndGlyphs" >%</text>
<text x="0" y="0" font-size="14.5" fill="#6a6a6a" text-anchor="end" transform="translate(132.1,678.4) rotate(-45)">янв.</text>
<text x="0" y="0" font-size="14.5" fill="#6a6a6a" text-anchor="end" transform="translate(203.9,678.4) rotate(-45)">февр.</text>
<text x="0" y="0" font-size="14.5" fill="#6a6a6a" text-anchor="end" transform="translate(275.8,678.4) rotate(-45)">мар.</text>
<text x="0" y="0" font-size="14.5" fill="#6a6a6a" text-anchor="end" transform="translate(347.6,678.4) rotate(-45)">апр.</text>
<text x="0" y="0" font-size="14.5" fill="#6a6a6a" text-anchor="end" transform="translate(419.5,678.4) rotate(-45)">май.</text>
<text x="0" y="0" font-size="14.5" fill="#6a6a6a" text-anchor="end" transform="translate(491.4,678.4) rotate(-45)">июн.</text>
<text x="0" y="0" font-size="14.5" fill="#6a6a6a" text-anchor="end" transform="translate(563.2,678.4) rotate(-45)">июл.</text>
<text x="0" y="0" font-size="14.5" fill="#6a6a6a" text-anchor="end" transform="translate(635.0,678.4) rotate(-45)">авг.</text>
<text x="0" y="0" font-size="14.5" fill="#6a6a6a" text-anchor="end" transform="translate(706.9,678.4) rotate(-45)">сент.</text>
<text x="0" y="0" font-size="14.5" fill="#6a6a6a" text-anchor="end" transform="translate(778.7,678.4) rotate(-45)">окт.</text>
<text x="0" y="0" font-size="14.5" fill="#6a6a6a" text-anchor="end" transform="translate(850.6,678.4) rotate(-45)">нояб.</text>
<text x="0" y="0" font-size="14.5" fill="#6a6a6a" text-anchor="end" transform="translate(922.4,678.4) rotate(-45)">дек.</text>
<text x="13.30" y="759.00" font-size="17" fill="#757575" font-style="italic" textLength="203.40" lengthAdjust="spacingAndGlyphs">ОБЩАЯ РЕНТАБЕЛЬНОСТЬ</text>
<line x1="120" y1="797.5" x2="133" y2="797.5" stroke="#4477aa" stroke-width="2" />
<circle cx="126.5" cy="797.5" r="3.2" fill="#4477aa"/>
<text x="143.30" y="803.30" font-size="17" fill="#595959" textLength="163.40" lengthAdjust="spacingAndGlyphs">ОБЩАЯ РЕНТАБЕЛЬ...</text>
<rect x="337.3" y="791.7" width="12.7" height="11.6" fill="#b3c3d4"/>
<text x="360.70" y="803.30" font-size="17" fill="#595959" textLength="53.60" lengthAdjust="spacingAndGlyphs">EBITDA</text>
<line x1="99" y1="829.3" x2="876" y2="829.3" stroke="#d9d9d9" stroke-width="1.2" />
<line x1="99" y1="914.3" x2="876" y2="914.3" stroke="#d9d9d9" stroke-width="1.2" />
<line x1="109" y1="829.3" x2="109" y2="998.3" stroke="#d9d9d9" stroke-width="1.2" />
<line x1="875.7" y1="829.3" x2="875.7" y2="998.3" stroke="#d9d9d9" stroke-width="1.2" />
<line x1="876" y1="829.3" x2="886.7" y2="829.3" stroke="#d9d9d9" stroke-width="1.2" />
<line x1="876" y1="863.1" x2="886.7" y2="863.1" stroke="#d9d9d9" stroke-width="1.2" />
<line x1="876" y1="896.9" x2="886.7" y2="896.9" stroke="#d9d9d9" stroke-width="1.2" />
<line x1="876" y1="930.7" x2="886.7" y2="930.7" stroke="#d9d9d9" stroke-width="1.2" />
<line x1="876" y1="964.5" x2="886.7" y2="964.5" stroke="#d9d9d9" stroke-width="1.2" />
<line x1="876" y1="998.3" x2="886.7" y2="998.3" stroke="#d9d9d9" stroke-width="1.2" />
<text x="30.64" y="835.70" font-size="16.39" fill="#7a7a7a" font-weight="normal" font-family='"Liberation Mono", monospace' text-anchor="middle" textLength="9.34" lengthAdjust="spacingAndGlyphs" >2</text>
<text x="41.98" y="835.70" font-size="16.39" fill="#7a7a7a" font-weight="normal" font-family='"Liberation Mono", monospace' text-anchor="middle" textLength="9.34" lengthAdjust="spacingAndGlyphs" >0</text>
<text x="50.94" y="835.70" font-size="16.39" fill="#7a7a7a" font-weight="normal" font-family='"Liberation Mono", monospace' text-anchor="middle" textLength="9.34" lengthAdjust="spacingAndGlyphs" >0</text>
<text x="59.91" y="835.70" font-size="16.39" fill="#7a7a7a" font-weight="normal" font-family='"Liberation Mono", monospace' text-anchor="middle" textLength="9.34" lengthAdjust="spacingAndGlyphs" >0</text>
<text x="71.25" y="835.70" font-size="16.39" fill="#7a7a7a" font-weight="normal" font-family='"Liberation Mono", monospace' text-anchor="middle" textLength="9.34" lengthAdjust="spacingAndGlyphs" >0</text>
<text x="80.21" y="835.70" font-size="16.39" fill="#7a7a7a" font-weight="normal" font-family='"Liberation Mono", monospace' text-anchor="middle" textLength="9.34" lengthAdjust="spacingAndGlyphs" >0</text>
<text x="89.17" y="835.70" font-size="16.39" fill="#7a7a7a" font-weight="normal" font-family='"Liberation Mono", monospace' text-anchor="middle" textLength="9.34" lengthAdjust="spacingAndGlyphs" >0</text>
<text x="30.64" y="920.70" font-size="16.39" fill="#7a7a7a" font-weight="normal" font-family='"Liberation Mono", monospace' text-anchor="middle" textLength="9.34" lengthAdjust="spacingAndGlyphs" >1</text>
<text x="41.98" y="920.70" font-size="16.39" fill="#7a7a7a" font-weight="normal" font-family='"Liberation Mono", monospace' text-anchor="middle" textLength="9.34" lengthAdjust="spacingAndGlyphs" >0</text>
<text x="50.94" y="920.70" font-size="16.39" fill="#7a7a7a" font-weight="normal" font-family='"Liberation Mono", monospace' text-anchor="middle" textLength="9.34" lengthAdjust="spacingAndGlyphs" >0</text>
<text x="59.91" y="920.70" font-size="16.39" fill="#7a7a7a" font-weight="normal" font-family='"Liberation Mono", monospace' text-anchor="middle" textLength="9.34" lengthAdjust="spacingAndGlyphs" >0</text>
<text x="71.25" y="920.70" font-size="16.39" fill="#7a7a7a" font-weight="normal" font-family='"Liberation Mono", monospace' text-anchor="middle" textLength="9.34" lengthAdjust="spacingAndGlyphs" >0</text>
<text x="80.21" y="920.70" font-size="16.39" fill="#7a7a7a" font-weight="normal" font-family='"Liberation Mono", monospace' text-anchor="middle" textLength="9.34" lengthAdjust="spacingAndGlyphs" >0</text>
<text x="89.17" y="920.70" font-size="16.39" fill="#7a7a7a" font-weight="normal" font-family='"Liberation Mono", monospace' text-anchor="middle" textLength="9.34" lengthAdjust="spacingAndGlyphs" >0</text>
<text x="89.17" y="1004.70" font-size="16.39" fill="#7a7a7a" font-weight="normal" font-family='"Liberation Mono", monospace' text-anchor="middle" textLength="9.34" lengthAdjust="spacingAndGlyphs" >0</text>
<text x="896.43" y="835.70" font-size="16.39" fill="#7a7a7a" font-weight="normal" font-family='"Liberation Mono", monospace' text-anchor="middle" textLength="9.34" lengthAdjust="spacingAndGlyphs" >1</text>
<text x="905.39" y="835.70" font-size="16.39" fill="#7a7a7a" font-weight="normal" font-family='"Liberation Mono", monospace' text-anchor="middle" textLength="9.34" lengthAdjust="spacingAndGlyphs" >0</text>
<text x="911.49" y="835.70" font-size="16.39" fill="#7a7a7a" font-weight="normal" font-family='"Liberation Mono", monospace' text-anchor="middle" textLength="5.41" lengthAdjust="spacingAndGlyphs" >,</text>
<text x="917.59" y="835.70" font-size="16.39" fill="#7a7a7a" font-weight="normal" font-family='"Liberation Mono", monospace' text-anchor="middle" textLength="9.34" lengthAdjust="spacingAndGlyphs" >0</text>
<text x="926.56" y="835.70" font-size="16.39" fill="#7a7a7a" font-weight="normal" font-family='"Liberation Mono", monospace' text-anchor="middle" textLength="9.34" lengthAdjust="spacingAndGlyphs" >0</text>
<text x="935.63" y="835.70" font-size="16.39" fill="#7a7a7a" font-weight="normal" font-family='"Liberation Mono", monospace' text-anchor="middle" textLength="7.37" lengthAdjust="spacingAndGlyphs" >%</text>
<text x="896.43" y="869.50" font-size="16.39" fill="#7a7a7a" font-weight="normal" font-family='"Liberation Mono", monospace' text-anchor="middle" textLength="9.34" lengthAdjust="spacingAndGlyphs" >9</text>
<text x="902.53" y="869.50" font-size="16.39" fill="#7a7a7a" font-weight="normal" font-family='"Liberation Mono", monospace' text-anchor="middle" textLength="5.41" lengthAdjust="spacingAndGlyphs" >,</text>
<text x="908.63" y="869.50" font-size="16.39" fill="#7a7a7a" font-weight="normal" font-family='"Liberation Mono", monospace' text-anchor="middle" textLength="9.34" lengthAdjust="spacingAndGlyphs" >0</text>
<text x="917.59" y="869.50" font-size="16.39" fill="#7a7a7a" font-weight="normal" font-family='"Liberation Mono", monospace' text-anchor="middle" textLength="9.34" lengthAdjust="spacingAndGlyphs" >0</text>
<text x="926.67" y="869.50" font-size="16.39" fill="#7a7a7a" font-weight="normal" font-family='"Liberation Mono", monospace' text-anchor="middle" textLength="7.37" lengthAdjust="spacingAndGlyphs" >%</text>
<text x="896.43" y="903.30" font-size="16.39" fill="#7a7a7a" font-weight="normal" font-family='"Liberation Mono", monospace' text-anchor="middle" textLength="9.34" lengthAdjust="spacingAndGlyphs" >8</text>
<text x="902.53" y="903.30" font-size="16.39" fill="#7a7a7a" font-weight="normal" font-family='"Liberation Mono", monospace' text-anchor="middle" textLength="5.41" lengthAdjust="spacingAndGlyphs" >,</text>
<text x="908.63" y="903.30" font-size="16.39" fill="#7a7a7a" font-weight="normal" font-family='"Liberation Mono", monospace' text-anchor="middle" textLength="9.34" lengthAdjust="spacingAndGlyphs" >0</text>
<text x="917.59" y="903.30" font-size="16.39" fill="#7a7a7a" font-weight="normal" font-family='"Liberation Mono", monospace' text-anchor="middle" textLength="9.34" lengthAdjust="spacingAndGlyphs" >0</text>
<text x="926.67" y="903.30" font-size="16.39" fill="#7a7a7a" font-weight="normal" font-family='"Liberation Mono", monospace' text-anchor="middle" textLength="7.37" lengthAdjust="spacingAndGlyphs" >%</text>
<text x="896.43" y="937.10" font-size="16.39" fill="#7a7a7a" font-weight="normal" font-family='"Liberation Mono", monospace' text-anchor="middle" textLength="9.34" lengthAdjust="spacingAndGlyphs" >7</text>
<text x="902.53" y="937.10" font-size="16.39" fill="#7a7a7a" font-weight="normal" font-family='"Liberation Mono", monospace' text-anchor="middle" textLength="5.41" lengthAdjust="spacingAndGlyphs" >,</text>
<text x="908.63" y="937.10" font-size="16.39" fill="#7a7a7a" font-weight="normal" font-family='"Liberation Mono", monospace' text-anchor="middle" textLength="9.34" lengthAdjust="spacingAndGlyphs" >0</text>
<text x="917.59" y="937.10" font-size="16.39" fill="#7a7a7a" font-weight="normal" font-family='"Liberation Mono", monospace' text-anchor="middle" textLength="9.34" lengthAdjust="spacingAndGlyphs" >0</text>
<text x="926.67" y="937.10" font-size="16.39" fill="#7a7a7a" font-weight="normal" font-family='"Liberation Mono", monospace' text-anchor="middle" textLength="7.37" lengthAdjust="spacingAndGlyphs" >%</text>
<text x="896.43" y="970.90" font-size="16.39" fill="#7a7a7a" font-weight="normal" font-family='"Liberation Mono", monospace' text-anchor="middle" textLength="9.34" lengthAdjust="spacingAndGlyphs" >6</text>
<text x="902.53" y="970.90" font-size="16.39" fill="#7a7a7a" font-weight="normal" font-family='"Liberation Mono", monospace' text-anchor="middle" textLength="5.41" lengthAdjust="spacingAndGlyphs" >,</text>
<text x="908.63" y="970.90" font-size="16.39" fill="#7a7a7a" font-weight="normal" font-family='"Liberation Mono", monospace' text-anchor="middle" textLength="9.34" lengthAdjust="spacingAndGlyphs" >0</text>
<text x="917.59" y="970.90" font-size="16.39" fill="#7a7a7a" font-weight="normal" font-family='"Liberation Mono", monospace' text-anchor="middle" textLength="9.34" lengthAdjust="spacingAndGlyphs" >0</text>
<text x="926.67" y="970.90" font-size="16.39" fill="#7a7a7a" font-weight="normal" font-family='"Liberation Mono", monospace' text-anchor="middle" textLength="7.37" lengthAdjust="spacingAndGlyphs" >%</text>
<text x="896.43" y="1004.70" font-size="16.39" fill="#7a7a7a" font-weight="normal" font-family='"Liberation Mono", monospace' text-anchor="middle" textLength="9.34" lengthAdjust="spacingAndGlyphs" >5</text>
<text x="902.53" y="1004.70" font-size="16.39" fill="#7a7a7a" font-weight="normal" font-family='"Liberation Mono", monospace' text-anchor="middle" textLength="5.41" lengthAdjust="spacingAndGlyphs" >,</text>
<text x="908.63" y="1004.70" font-size="16.39" fill="#7a7a7a" font-weight="normal" font-family='"Liberation Mono", monospace' text-anchor="middle" textLength="9.34" lengthAdjust="spacingAndGlyphs" >0</text>
<text x="917.59" y="1004.70" font-size="16.39" fill="#7a7a7a" font-weight="normal" font-family='"Liberation Mono", monospace' text-anchor="middle" textLength="9.34" lengthAdjust="spacingAndGlyphs" >0</text>
<text x="926.67" y="1004.70" font-size="16.39" fill="#7a7a7a" font-weight="normal" font-family='"Liberation Mono", monospace' text-anchor="middle" textLength="7.37" lengthAdjust="spacingAndGlyphs" >%</text>
<rect x="119.70" y="960.70" width="44.4" height="37.60" fill="#b3c3d4"/>
<rect x="183.62" y="946.92" width="44.4" height="51.38" fill="#b3c3d4"/>
<rect x="247.54" y="927.91" width="44.4" height="70.39" fill="#b3c3d4"/>
<rect x="311.46" y="937.46" width="44.4" height="60.84" fill="#b3c3d4"/>
<rect x="375.38" y="942.53" width="44.4" height="55.77" fill="#b3c3d4"/>
<rect x="439.30" y="932.47" width="44.4" height="65.83" fill="#b3c3d4"/>
<rect x="503.22" y="940.50" width="44.4" height="57.80" fill="#b3c3d4"/>
<rect x="567.14" y="938.14" width="44.4" height="60.16" fill="#b3c3d4"/>
<rect x="631.06" y="922.76" width="44.4" height="75.54" fill="#b3c3d4"/>
<rect x="694.98" y="901.12" width="44.4" height="97.17" fill="#b3c3d4"/>
<rect x="758.90" y="890.14" width="44.4" height="108.16" fill="#b3c3d4"/>
<rect x="822.82" y="831.33" width="44.4" height="166.97" fill="#b3c3d4"/>
<line x1="109" y1="998.3" x2="876" y2="998.3" stroke="#a8a8a8" stroke-width="1.4" />
<line x1="99" y1="998.3" x2="109" y2="998.3" stroke="#d9d9d9" stroke-width="1.2" />
<line x1="99" y1="829.3" x2="109" y2="829.3" stroke="#d9d9d9" stroke-width="1.2" />
<line x1="99" y1="914.3" x2="109" y2="914.3" stroke="#d9d9d9" stroke-width="1.2" />
<polyline points="141.90,970.58 205.82,924.62 269.74,887.10 333.66,882.37 397.58,886.76 461.50,883.04 525.42,891.15 589.34,896.56 653.26,892.17 717.18,881.35 781.10,867.83 845.02,842.48" fill="none" stroke="#4477aa" stroke-width="1.5"/>
<circle cx="141.90" cy="970.58" r="3.4" fill="#4477aa"/>
<circle cx="205.82" cy="924.62" r="3.4" fill="#4477aa"/>
<circle cx="269.74" cy="887.10" r="3.4" fill="#4477aa"/>
<circle cx="333.66" cy="882.37" r="3.4" fill="#4477aa"/>
<circle cx="397.58" cy="886.76" r="3.4" fill="#4477aa"/>
<circle cx="461.50" cy="883.04" r="3.4" fill="#4477aa"/>
<circle cx="525.42" cy="891.15" r="3.4" fill="#4477aa"/>
<circle cx="589.34" cy="896.56" r="3.4" fill="#4477aa"/>
<circle cx="653.26" cy="892.17" r="3.4" fill="#4477aa"/>
<circle cx="717.18" cy="881.35" r="3.4" fill="#4477aa"/>
<circle cx="781.10" cy="867.83" r="3.4" fill="#4477aa"/>
<circle cx="845.02" cy="842.48" r="3.4" fill="#4477aa"/>
<text x="127.61" y="989.30" font-size="14.57" fill="#555555" font-weight="normal" font-family='"Liberation Mono", monospace' text-anchor="middle" textLength="8.30" lengthAdjust="spacingAndGlyphs" >5</text>
<text x="133.04" y="989.30" font-size="14.57" fill="#555555" font-weight="normal" font-family='"Liberation Mono", monospace' text-anchor="middle" textLength="4.81" lengthAdjust="spacingAndGlyphs" >,</text>
<text x="138.46" y="989.30" font-size="14.57" fill="#555555" font-weight="normal" font-family='"Liberation Mono", monospace' text-anchor="middle" textLength="8.30" lengthAdjust="spacingAndGlyphs" >8</text>
<text x="146.43" y="989.30" font-size="14.57" fill="#555555" font-weight="normal" font-family='"Liberation Mono", monospace' text-anchor="middle" textLength="8.30" lengthAdjust="spacingAndGlyphs" >2</text>
<text x="154.49" y="989.30" font-size="14.57" fill="#555555" font-weight="normal" font-family='"Liberation Mono", monospace' text-anchor="middle" textLength="6.56" lengthAdjust="spacingAndGlyphs" >%</text>
<text x="175.01" y="916.70" font-size="14.57" fill="#555555" font-weight="normal" font-family='"Liberation Mono", monospace' text-anchor="middle" textLength="8.30" lengthAdjust="spacingAndGlyphs" >7</text>
<text x="180.44" y="916.70" font-size="14.57" fill="#555555" font-weight="normal" font-family='"Liberation Mono", monospace' text-anchor="middle" textLength="4.81" lengthAdjust="spacingAndGlyphs" >,</text>
<text x="185.86" y="916.70" font-size="14.57" fill="#555555" font-weight="normal" font-family='"Liberation Mono", monospace' text-anchor="middle" textLength="8.30" lengthAdjust="spacingAndGlyphs" >1</text>
<text x="193.83" y="916.70" font-size="14.57" fill="#555555" font-weight="normal" font-family='"Liberation Mono", monospace' text-anchor="middle" textLength="8.30" lengthAdjust="spacingAndGlyphs" >8</text>
<text x="201.89" y="916.70" font-size="14.57" fill="#555555" font-weight="normal" font-family='"Liberation Mono", monospace' text-anchor="middle" textLength="6.56" lengthAdjust="spacingAndGlyphs" >%</text>
<text x="255.61" y="878.30" font-size="14.57" fill="#555555" font-weight="normal" font-family='"Liberation Mono", monospace' text-anchor="middle" textLength="8.30" lengthAdjust="spacingAndGlyphs" >8</text>
<text x="261.04" y="878.30" font-size="14.57" fill="#555555" font-weight="normal" font-family='"Liberation Mono", monospace' text-anchor="middle" textLength="4.81" lengthAdjust="spacingAndGlyphs" >,</text>
<text x="266.46" y="878.30" font-size="14.57" fill="#555555" font-weight="normal" font-family='"Liberation Mono", monospace' text-anchor="middle" textLength="8.30" lengthAdjust="spacingAndGlyphs" >2</text>
<text x="274.43" y="878.30" font-size="14.57" fill="#555555" font-weight="normal" font-family='"Liberation Mono", monospace' text-anchor="middle" textLength="8.30" lengthAdjust="spacingAndGlyphs" >9</text>
<text x="282.49" y="878.30" font-size="14.57" fill="#555555" font-weight="normal" font-family='"Liberation Mono", monospace' text-anchor="middle" textLength="6.56" lengthAdjust="spacingAndGlyphs" >%</text>
<text x="319.31" y="874.00" font-size="14.57" fill="#555555" font-weight="normal" font-family='"Liberation Mono", monospace' text-anchor="middle" textLength="8.30" lengthAdjust="spacingAndGlyphs" >8</text>
<text x="324.74" y="874.00" font-size="14.57" fill="#555555" font-weight="normal" font-family='"Liberation Mono", monospace' text-anchor="middle" textLength="4.81" lengthAdjust="spacingAndGlyphs" >,</text>
<text x="330.16" y="874.00" font-size="14.57" fill="#555555" font-weight="normal" font-family='"Liberation Mono", monospace' text-anchor="middle" textLength="8.30" lengthAdjust="spacingAndGlyphs" >4</text>
<text x="338.13" y="874.00" font-size="14.57" fill="#555555" font-weight="normal" font-family='"Liberation Mono", monospace' text-anchor="middle" textLength="8.30" lengthAdjust="spacingAndGlyphs" >3</text>
<text x="346.19" y="874.00" font-size="14.57" fill="#555555" font-weight="normal" font-family='"Liberation Mono", monospace' text-anchor="middle" textLength="6.56" lengthAdjust="spacingAndGlyphs" >%</text>
<text x="383.31" y="905.30" font-size="14.57" fill="#555555" font-weight="normal" font-family='"Liberation Mono", monospace' text-anchor="middle" textLength="8.30" lengthAdjust="spacingAndGlyphs" >8</text>
<text x="388.74" y="905.30" font-size="14.57" fill="#555555" font-weight="normal" font-family='"Liberation Mono", monospace' text-anchor="middle" textLength="4.81" lengthAdjust="spacingAndGlyphs" >,</text>
<text x="394.16" y="905.30" font-size="14.57" fill="#555555" font-weight="normal" font-family='"Liberation Mono", monospace' text-anchor="middle" textLength="8.30" lengthAdjust="spacingAndGlyphs" >3</text>
<text x="402.13" y="905.30" font-size="14.57" fill="#555555" font-weight="normal" font-family='"Liberation Mono", monospace' text-anchor="middle" textLength="8.30" lengthAdjust="spacingAndGlyphs" >0</text>
<text x="410.19" y="905.30" font-size="14.57" fill="#555555" font-weight="normal" font-family='"Liberation Mono", monospace' text-anchor="middle" textLength="6.56" lengthAdjust="spacingAndGlyphs" >%</text>
<text x="446.61" y="875.00" font-size="14.57" fill="#555555" font-weight="normal" font-family='"Liberation Mono", monospace' text-anchor="middle" textLength="8.30" lengthAdjust="spacingAndGlyphs" >8</text>
<text x="452.04" y="875.00" font-size="14.57" fill="#555555" font-weight="normal" font-family='"Liberation Mono", monospace' text-anchor="middle" textLength="4.81" lengthAdjust="spacingAndGlyphs" >,</text>
<text x="457.46" y="875.00" font-size="14.57" fill="#555555" font-weight="normal" font-family='"Liberation Mono", monospace' text-anchor="middle" textLength="8.30" lengthAdjust="spacingAndGlyphs" >4</text>
<text x="465.43" y="875.00" font-size="14.57" fill="#555555" font-weight="normal" font-family='"Liberation Mono", monospace' text-anchor="middle" textLength="8.30" lengthAdjust="spacingAndGlyphs" >1</text>
<text x="473.49" y="875.00" font-size="14.57" fill="#555555" font-weight="normal" font-family='"Liberation Mono", monospace' text-anchor="middle" textLength="6.56" lengthAdjust="spacingAndGlyphs" >%</text>
<text x="511.61" y="882.70" font-size="14.57" fill="#555555" font-weight="normal" font-family='"Liberation Mono", monospace' text-anchor="middle" textLength="8.30" lengthAdjust="spacingAndGlyphs" >8</text>
<text x="517.04" y="882.70" font-size="14.57" fill="#555555" font-weight="normal" font-family='"Liberation Mono", monospace' text-anchor="middle" textLength="4.81" lengthAdjust="spacingAndGlyphs" >,</text>
<text x="522.46" y="882.70" font-size="14.57" fill="#555555" font-weight="normal" font-family='"Liberation Mono", monospace' text-anchor="middle" textLength="8.30" lengthAdjust="spacingAndGlyphs" >1</text>
<text x="530.43" y="882.70" font-size="14.57" fill="#555555" font-weight="normal" font-family='"Liberation Mono", monospace' text-anchor="middle" textLength="8.30" lengthAdjust="spacingAndGlyphs" >7</text>
<text x="538.49" y="882.70" font-size="14.57" fill="#555555" font-weight="normal" font-family='"Liberation Mono", monospace' text-anchor="middle" textLength="6.56" lengthAdjust="spacingAndGlyphs" >%</text>
<text x="575.01" y="915.70" font-size="14.57" fill="#555555" font-weight="normal" font-family='"Liberation Mono", monospace' text-anchor="middle" textLength="8.30" lengthAdjust="spacingAndGlyphs" >8</text>
<text x="580.44" y="915.70" font-size="14.57" fill="#555555" font-weight="normal" font-family='"Liberation Mono", monospace' text-anchor="middle" textLength="4.81" lengthAdjust="spacingAndGlyphs" >,</text>
<text x="585.86" y="915.70" font-size="14.57" fill="#555555" font-weight="normal" font-family='"Liberation Mono", monospace' text-anchor="middle" textLength="8.30" lengthAdjust="spacingAndGlyphs" >0</text>
<text x="593.83" y="915.70" font-size="14.57" fill="#555555" font-weight="normal" font-family='"Liberation Mono", monospace' text-anchor="middle" textLength="8.30" lengthAdjust="spacingAndGlyphs" >1</text>
<text x="601.89" y="915.70" font-size="14.57" fill="#555555" font-weight="normal" font-family='"Liberation Mono", monospace' text-anchor="middle" textLength="6.56" lengthAdjust="spacingAndGlyphs" >%</text>
<text x="639.01" y="883.30" font-size="14.57" fill="#555555" font-weight="normal" font-family='"Liberation Mono", monospace' text-anchor="middle" textLength="8.30" lengthAdjust="spacingAndGlyphs" >8</text>
<text x="644.44" y="883.30" font-size="14.57" fill="#555555" font-weight="normal" font-family='"Liberation Mono", monospace' text-anchor="middle" textLength="4.81" lengthAdjust="spacingAndGlyphs" >,</text>
<text x="649.86" y="883.30" font-size="14.57" fill="#555555" font-weight="normal" font-family='"Liberation Mono", monospace' text-anchor="middle" textLength="8.30" lengthAdjust="spacingAndGlyphs" >1</text>
<text x="657.83" y="883.30" font-size="14.57" fill="#555555" font-weight="normal" font-family='"Liberation Mono", monospace' text-anchor="middle" textLength="8.30" lengthAdjust="spacingAndGlyphs" >4</text>
<text x="665.89" y="883.30" font-size="14.57" fill="#555555" font-weight="normal" font-family='"Liberation Mono", monospace' text-anchor="middle" textLength="6.56" lengthAdjust="spacingAndGlyphs" >%</text>
<text x="702.61" y="872.70" font-size="14.57" fill="#555555" font-weight="normal" font-family='"Liberation Mono", monospace' text-anchor="middle" textLength="8.30" lengthAdjust="spacingAndGlyphs" >8</text>
<text x="708.04" y="872.70" font-size="14.57" fill="#555555" font-weight="normal" font-family='"Liberation Mono", monospace' text-anchor="middle" textLength="4.81" lengthAdjust="spacingAndGlyphs" >,</text>
<text x="713.46" y="872.70" font-size="14.57" fill="#555555" font-weight="normal" font-family='"Liberation Mono", monospace' text-anchor="middle" textLength="8.30" lengthAdjust="spacingAndGlyphs" >4</text>
<text x="721.43" y="872.70" font-size="14.57" fill="#555555" font-weight="normal" font-family='"Liberation Mono", monospace' text-anchor="middle" textLength="8.30" lengthAdjust="spacingAndGlyphs" >6</text>
<text x="729.49" y="872.70" font-size="14.57" fill="#555555" font-weight="normal" font-family='"Liberation Mono", monospace' text-anchor="middle" textLength="6.56" lengthAdjust="spacingAndGlyphs" >%</text>
<text x="746.61" y="859.30" font-size="14.57" fill="#555555" font-weight="normal" font-family='"Liberation Mono", monospace' text-anchor="middle" textLength="8.30" lengthAdjust="spacingAndGlyphs" >8</text>
<text x="752.04" y="859.30" font-size="14.57" fill="#555555" font-weight="normal" font-family='"Liberation Mono", monospace' text-anchor="middle" textLength="4.81" lengthAdjust="spacingAndGlyphs" >,</text>
<text x="757.46" y="859.30" font-size="14.57" fill="#555555" font-weight="normal" font-family='"Liberation Mono", monospace' text-anchor="middle" textLength="8.30" lengthAdjust="spacingAndGlyphs" >8</text>
<text x="765.43" y="859.30" font-size="14.57" fill="#555555" font-weight="normal" font-family='"Liberation Mono", monospace' text-anchor="middle" textLength="8.30" lengthAdjust="spacingAndGlyphs" >6</text>
<text x="773.49" y="859.30" font-size="14.57" fill="#555555" font-weight="normal" font-family='"Liberation Mono", monospace' text-anchor="middle" textLength="6.56" lengthAdjust="spacingAndGlyphs" >%</text>
<text x="830.01" y="834.30" font-size="14.57" fill="#555555" font-weight="normal" font-family='"Liberation Mono", monospace' text-anchor="middle" textLength="8.30" lengthAdjust="spacingAndGlyphs" >9</text>
<text x="835.44" y="834.30" font-size="14.57" fill="#555555" font-weight="normal" font-family='"Liberation Mono", monospace' text-anchor="middle" textLength="4.81" lengthAdjust="spacingAndGlyphs" >,</text>
<text x="840.86" y="834.30" font-size="14.57" fill="#555555" font-weight="normal" font-family='"Liberation Mono", monospace' text-anchor="middle" textLength="8.30" lengthAdjust="spacingAndGlyphs" >6</text>
<text x="848.83" y="834.30" font-size="14.57" fill="#555555" font-weight="normal" font-family='"Liberation Mono", monospace' text-anchor="middle" textLength="8.30" lengthAdjust="spacingAndGlyphs" >1</text>
<text x="856.89" y="834.30" font-size="14.57" fill="#555555" font-weight="normal" font-family='"Liberation Mono", monospace' text-anchor="middle" textLength="6.56" lengthAdjust="spacingAndGlyphs" >%</text>
<text x="0" y="0" font-size="14.5" fill="#6a6a6a" text-anchor="end" transform="translate(147.7,1011.3) rotate(-45)">янв.</text>
<text x="0" y="0" font-size="14.5" fill="#6a6a6a" text-anchor="end" transform="translate(211.6,1011.3) rotate(-45)">февр.</text>
<text x="0" y="0" font-size="14.5" fill="#6a6a6a" text-anchor="end" transform="translate(275.5,1011.3) rotate(-45)">мар.</text>
<text x="0" y="0" font-size="14.5" fill="#6a6a6a" text-anchor="end" transform="translate(339.5,1011.3) rotate(-45)">апр.</text>
<text x="0" y="0" font-size="14.5" fill="#6a6a6a" text-anchor="end" transform="translate(403.4,1011.3) rotate(-45)">май.</text>
<text x="0" y="0" font-size="14.5" fill="#6a6a6a" text-anchor="end" transform="translate(467.3,1011.3) rotate(-45)">июн.</text>
<text x="0" y="0" font-size="14.5" fill="#6a6a6a" text-anchor="end" transform="translate(531.2,1011.3) rotate(-45)">июл.</text>
<text x="0" y="0" font-size="14.5" fill="#6a6a6a" text-anchor="end" transform="translate(595.1,1011.3) rotate(-45)">авг.</text>
<text x="0" y="0" font-size="14.5" fill="#6a6a6a" text-anchor="end" transform="translate(659.1,1011.3) rotate(-45)">сент.</text>
<text x="0" y="0" font-size="14.5" fill="#6a6a6a" text-anchor="end" transform="translate(723.0,1011.3) rotate(-45)">окт.</text>
<text x="0" y="0" font-size="14.5" fill="#6a6a6a" text-anchor="end" transform="translate(786.9,1011.3) rotate(-45)">нояб.</text>
<text x="0" y="0" font-size="14.5" fill="#6a6a6a" text-anchor="end" transform="translate(850.8,1011.3) rotate(-45)">дек.</text>
<rect x="966" y="476" width="941" height="590" fill="#ffffff"/>
<line x1="966" y1="475.5" x2="1907" y2="475.5" stroke="#ececec" stroke-width="1" />
<line x1="966.7" y1="476" x2="966.7" y2="1066.5" stroke="#e3e3e3" stroke-width="1.4" />
<line x1="1907" y1="476" x2="1907" y2="1066.5" stroke="#e3e3e3" stroke-width="2" />
<rect x="975.2" y="486.8" width="184.79999999999995" height="32.99999999999994" fill="#ffffff" stroke="#c8c8c8" stroke-width="1" rx="4"/>
<text x="985.30" y="509.20" font-size="15.5" fill="#404040" font-weight="bold" textLength="133.70" lengthAdjust="spacingAndGlyphs">Номенклатурна...</text>
<circle cx="1141" cy="502.5" r="5.2" fill="none" stroke="#595959" stroke-width="1.6"/>
<line x1="1144.8" y1="506.3" x2="1149.5" y2="511" stroke="#595959" stroke-width="1.9" />
<rect x="1168.8" y="486.8" width="68.20000000000005" height="32.99999999999994" fill="#ffffff" stroke="#c8c8c8" stroke-width="1" rx="4"/>
<text x="1179.00" y="509.20" font-size="15.5" fill="#404040" font-weight="bold" textLength="47.70" lengthAdjust="spacingAndGlyphs">Values</text>
<rect x="1481.8" y="486.8" width="103.20000000000005" height="32.99999999999994" fill="#ffffff" stroke="#c8c8c8" stroke-width="1" rx="4"/>
<text x="1493.00" y="509.20" font-size="15.5" fill="#404040" font-weight="bold" textLength="56.30" lengthAdjust="spacingAndGlyphs">Период</text>
<circle cx="1565" cy="502.5" r="5.2" fill="none" stroke="#595959" stroke-width="1.6"/>
<line x1="1568.8" y1="506.3" x2="1573.5" y2="511" stroke="#595959" stroke-width="1.9" />
<defs><linearGradient id="sh" x1="0" y1="0" x2="0" y2="1"><stop offset="0" stop-color="#ffffff" stop-opacity="0"/><stop offset="1" stop-color="#e8e8e8" stop-opacity="1"/></linearGradient></defs>
<rect x="1475" y="1040" width="288" height="15.7" fill="url(#sh)"/>
<rect x="1475" y="1056.5" width="431" height="10" fill="#f0f0f0"/>
<line x1="1474" y1="531.3" x2="1907" y2="531.3" stroke="#e6e6e6" stroke-width="1" />
<line x1="966" y1="595.2" x2="1907" y2="595.2" stroke="#9a9a9a" stroke-width="1.3" />
<line x1="1265.5" y1="531" x2="1265.5" y2="1066.5" stroke="#9a9a9a" stroke-width="1.3" />
<line x1="1474.3" y1="476" x2="1474.3" y2="1066.5" stroke="#9a9a9a" stroke-width="1.3" />
<line x1="1618.4" y1="531" x2="1618.4" y2="1066.5" stroke="#e3e3e3" stroke-width="1.2" />
<line x1="1762.2" y1="531" x2="1762.2" y2="1066.5" stroke="#e3e3e3" stroke-width="1.2" />
<text x="1528.60" y="569.00" font-size="15" fill="#595959" textLength="36.20" lengthAdjust="spacingAndGlyphs">Факт</text>
<text x="1631.10" y="569.00" font-size="15" fill="#595959" textLength="119.00" lengthAdjust="spacingAndGlyphs">Факт (пред. год)</text>
<text x="1829.80" y="569.00" font-size="15" fill="#595959" textLength="9.70" lengthAdjust="spacingAndGlyphs">Δ</text>
<line x1="1266" y1="634.2" x2="1907" y2="634.2" stroke="#e3e3e3" stroke-width="1.2" />
<line x1="1266" y1="672.8" x2="1907" y2="672.8" stroke="#e3e3e3" stroke-width="1.2" />
<line x1="1266" y1="787.2" x2="1907" y2="787.2" stroke="#e3e3e3" stroke-width="1.2" />
<line x1="1266" y1="826.3" x2="1907" y2="826.3" stroke="#e3e3e3" stroke-width="1.2" />
<line x1="1266" y1="941.4" x2="1907" y2="941.4" stroke="#e3e3e3" stroke-width="1.2" />
<line x1="1266" y1="980.3" x2="1907" y2="980.3" stroke="#e3e3e3" stroke-width="1.2" />
<line x1="966" y1="748.9" x2="1907" y2="748.9" stroke="#e3e3e3" stroke-width="1.6" />
<line x1="966" y1="902.3" x2="1907" y2="902.3" stroke="#e3e3e3" stroke-width="1.3" />
<line x1="966" y1="1055.8" x2="1907" y2="1055.8" stroke="#e3e3e3" stroke-width="1.3" />
<rect x="1762.6" y="673" width="143.6" height="75.10000000000002" fill="#28702a"/>
<rect x="1762.6" y="826.9" width="143.6" height="74.70000000000005" fill="#28702a"/>
<rect x="1762.6" y="980.9" width="143.6" height="74.80000000000007" fill="#28702a"/>
<text x="973.30" y="619.70" font-size="16.6" fill="#404040" font-weight="bold" textLength="50.40" lengthAdjust="spacingAndGlyphs">ИТОГО</text>
<text x="1271.50" y="619.80" font-size="16.6" fill="#404040" font-weight="bold" textLength="55.20" lengthAdjust="spacingAndGlyphs">EBITDA</text>
<text x="1527.80" y="619.80" font-size="17.75" fill="#404040" font-weight="bold" font-family='"Liberation Mono", monospace' text-anchor="middle" textLength="10.12" lengthAdjust="spacingAndGlyphs" >1</text>
<text x="1537.51" y="619.80" font-size="17.75" fill="#404040" font-weight="bold" font-family='"Liberation Mono", monospace' text-anchor="middle" textLength="10.12" lengthAdjust="spacingAndGlyphs" >0</text>
<text x="1550.96" y="619.80" font-size="17.75" fill="#404040" font-weight="bold" font-family='"Liberation Mono", monospace' text-anchor="middle" textLength="10.12" lengthAdjust="spacingAndGlyphs" >7</text>
<text x="1560.68" y="619.80" font-size="17.75" fill="#404040" font-weight="bold" font-family='"Liberation Mono", monospace' text-anchor="middle" textLength="10.12" lengthAdjust="spacingAndGlyphs" >8</text>
<text x="1570.39" y="619.80" font-size="17.75" fill="#404040" font-weight="bold" font-family='"Liberation Mono", monospace' text-anchor="middle" textLength="10.12" lengthAdjust="spacingAndGlyphs" >1</text>
<text x="1583.84" y="619.80" font-size="17.75" fill="#404040" font-weight="bold" font-family='"Liberation Mono", monospace' text-anchor="middle" textLength="10.12" lengthAdjust="spacingAndGlyphs" >0</text>
<text x="1593.55" y="619.80" font-size="17.75" fill="#404040" font-weight="bold" font-family='"Liberation Mono", monospace' text-anchor="middle" textLength="10.12" lengthAdjust="spacingAndGlyphs" >8</text>
<text x="1603.26" y="619.80" font-size="17.75" fill="#404040" font-weight="bold" font-family='"Liberation Mono", monospace' text-anchor="middle" textLength="10.12" lengthAdjust="spacingAndGlyphs" >0</text>
<text x="1681.61" y="619.80" font-size="17.75" fill="#404040" font-weight="bold" font-family='"Liberation Mono", monospace' text-anchor="middle" textLength="10.12" lengthAdjust="spacingAndGlyphs" >7</text>
<text x="1695.06" y="619.80" font-size="17.75" fill="#404040" font-weight="bold" font-family='"Liberation Mono", monospace' text-anchor="middle" textLength="10.12" lengthAdjust="spacingAndGlyphs" >2</text>
<text x="1704.78" y="619.80" font-size="17.75" fill="#404040" font-weight="bold" font-family='"Liberation Mono", monospace' text-anchor="middle" textLength="10.12" lengthAdjust="spacingAndGlyphs" >9</text>
<text x="1714.49" y="619.80" font-size="17.75" fill="#404040" font-weight="bold" font-family='"Liberation Mono", monospace' text-anchor="middle" textLength="10.12" lengthAdjust="spacingAndGlyphs" >9</text>
<text x="1727.94" y="619.80" font-size="17.75" fill="#404040" font-weight="bold" font-family='"Liberation Mono", monospace' text-anchor="middle" textLength="10.12" lengthAdjust="spacingAndGlyphs" >7</text>
<text x="1737.65" y="619.80" font-size="17.75" fill="#404040" font-weight="bold" font-family='"Liberation Mono", monospace' text-anchor="middle" textLength="10.12" lengthAdjust="spacingAndGlyphs" >3</text>
<text x="1747.36" y="619.80" font-size="17.75" fill="#404040" font-weight="bold" font-family='"Liberation Mono", monospace' text-anchor="middle" textLength="10.12" lengthAdjust="spacingAndGlyphs" >3</text>
<text x="1823.41" y="619.80" font-size="17.75" fill="#2e6b2a" font-weight="bold" font-family='"Liberation Mono", monospace' text-anchor="middle" textLength="10.12" lengthAdjust="spacingAndGlyphs" >3</text>
<text x="1836.86" y="619.80" font-size="17.75" fill="#2e6b2a" font-weight="bold" font-family='"Liberation Mono", monospace' text-anchor="middle" textLength="10.12" lengthAdjust="spacingAndGlyphs" >4</text>
<text x="1846.58" y="619.80" font-size="17.75" fill="#2e6b2a" font-weight="bold" font-family='"Liberation Mono", monospace' text-anchor="middle" textLength="10.12" lengthAdjust="spacingAndGlyphs" >8</text>
<text x="1856.29" y="619.80" font-size="17.75" fill="#2e6b2a" font-weight="bold" font-family='"Liberation Mono", monospace' text-anchor="middle" textLength="10.12" lengthAdjust="spacingAndGlyphs" >1</text>
<text x="1869.74" y="619.80" font-size="17.75" fill="#2e6b2a" font-weight="bold" font-family='"Liberation Mono", monospace' text-anchor="middle" textLength="10.12" lengthAdjust="spacingAndGlyphs" >3</text>
<text x="1879.45" y="619.80" font-size="17.75" fill="#2e6b2a" font-weight="bold" font-family='"Liberation Mono", monospace' text-anchor="middle" textLength="10.12" lengthAdjust="spacingAndGlyphs" >4</text>
<text x="1889.16" y="619.80" font-size="17.75" fill="#2e6b2a" font-weight="bold" font-family='"Liberation Mono", monospace' text-anchor="middle" textLength="10.12" lengthAdjust="spacingAndGlyphs" >7</text>
<text x="1271.50" y="659.30" font-size="16.6" fill="#404040" font-weight="bold" textLength="69.00" lengthAdjust="spacingAndGlyphs">Продажи</text>
<text x="1518.09" y="659.30" font-size="17.75" fill="#404040" font-weight="bold" font-family='"Liberation Mono", monospace' text-anchor="middle" textLength="10.12" lengthAdjust="spacingAndGlyphs" >1</text>
<text x="1527.80" y="659.30" font-size="17.75" fill="#404040" font-weight="bold" font-family='"Liberation Mono", monospace' text-anchor="middle" textLength="10.12" lengthAdjust="spacingAndGlyphs" >1</text>
<text x="1537.51" y="659.30" font-size="17.75" fill="#404040" font-weight="bold" font-family='"Liberation Mono", monospace' text-anchor="middle" textLength="10.12" lengthAdjust="spacingAndGlyphs" >2</text>
<text x="1550.96" y="659.30" font-size="17.75" fill="#404040" font-weight="bold" font-family='"Liberation Mono", monospace' text-anchor="middle" textLength="10.12" lengthAdjust="spacingAndGlyphs" >1</text>
<text x="1560.68" y="659.30" font-size="17.75" fill="#404040" font-weight="bold" font-family='"Liberation Mono", monospace' text-anchor="middle" textLength="10.12" lengthAdjust="spacingAndGlyphs" >2</text>
<text x="1570.39" y="659.30" font-size="17.75" fill="#404040" font-weight="bold" font-family='"Liberation Mono", monospace' text-anchor="middle" textLength="10.12" lengthAdjust="spacingAndGlyphs" >8</text>
<text x="1583.84" y="659.30" font-size="17.75" fill="#404040" font-weight="bold" font-family='"Liberation Mono", monospace' text-anchor="middle" textLength="10.12" lengthAdjust="spacingAndGlyphs" >0</text>
<text x="1593.55" y="659.30" font-size="17.75" fill="#404040" font-weight="bold" font-family='"Liberation Mono", monospace' text-anchor="middle" textLength="10.12" lengthAdjust="spacingAndGlyphs" >2</text>
<text x="1603.26" y="659.30" font-size="17.75" fill="#404040" font-weight="bold" font-family='"Liberation Mono", monospace' text-anchor="middle" textLength="10.12" lengthAdjust="spacingAndGlyphs" >8</text>
<text x="1671.90" y="659.30" font-size="17.75" fill="#404040" font-weight="bold" font-family='"Liberation Mono", monospace' text-anchor="middle" textLength="10.12" lengthAdjust="spacingAndGlyphs" >9</text>
<text x="1681.61" y="659.30" font-size="17.75" fill="#404040" font-weight="bold" font-family='"Liberation Mono", monospace' text-anchor="middle" textLength="10.12" lengthAdjust="spacingAndGlyphs" >0</text>
<text x="1695.06" y="659.30" font-size="17.75" fill="#404040" font-weight="bold" font-family='"Liberation Mono", monospace' text-anchor="middle" textLength="10.12" lengthAdjust="spacingAndGlyphs" >1</text>
<text x="1704.78" y="659.30" font-size="17.75" fill="#404040" font-weight="bold" font-family='"Liberation Mono", monospace' text-anchor="middle" textLength="10.12" lengthAdjust="spacingAndGlyphs" >5</text>
<text x="1714.49" y="659.30" font-size="17.75" fill="#404040" font-weight="bold" font-family='"Liberation Mono", monospace' text-anchor="middle" textLength="10.12" lengthAdjust="spacingAndGlyphs" >7</text>
<text x="1727.94" y="659.30" font-size="17.75" fill="#404040" font-weight="bold" font-family='"Liberation Mono", monospace' text-anchor="middle" textLength="10.12" lengthAdjust="spacingAndGlyphs" >1</text>
<text x="1737.65" y="659.30" font-size="17.75" fill="#404040" font-weight="bold" font-family='"Liberation Mono", monospace' text-anchor="middle" textLength="10.12" lengthAdjust="spacingAndGlyphs" >0</text>
<text x="1747.36" y="659.30" font-size="17.75" fill="#404040" font-weight="bold" font-family='"Liberation Mono", monospace' text-anchor="middle" textLength="10.12" lengthAdjust="spacingAndGlyphs" >0</text>
<text x="1813.70" y="659.30" font-size="17.75" fill="#2e6b2a" font-weight="bold" font-family='"Liberation Mono", monospace' text-anchor="middle" textLength="10.12" lengthAdjust="spacingAndGlyphs" >2</text>
<text x="1823.41" y="659.30" font-size="17.75" fill="#2e6b2a" font-weight="bold" font-family='"Liberation Mono", monospace' text-anchor="middle" textLength="10.12" lengthAdjust="spacingAndGlyphs" >1</text>
<text x="1836.86" y="659.30" font-size="17.75" fill="#2e6b2a" font-weight="bold" font-family='"Liberation Mono", monospace' text-anchor="middle" textLength="10.12" lengthAdjust="spacingAndGlyphs" >9</text>
<text x="1846.58" y="659.30" font-size="17.75" fill="#2e6b2a" font-weight="bold" font-family='"Liberation Mono", monospace' text-anchor="middle" textLength="10.12" lengthAdjust="spacingAndGlyphs" >7</text>
<text x="1856.29" y="659.30" font-size="17.75" fill="#2e6b2a" font-weight="bold" font-family='"Liberation Mono", monospace' text-anchor="middle" textLength="10.12" lengthAdjust="spacingAndGlyphs" >0</text>
<text x="1869.74" y="659.30" font-size="17.75" fill="#2e6b2a" font-weight="bold" font-family='"Liberation Mono", monospace' text-anchor="middle" textLength="10.12" lengthAdjust="spacingAndGlyphs" >9</text>
<text x="1879.45" y="659.30" font-size="17.75" fill="#2e6b2a" font-weight="bold" font-family='"Liberation Mono", monospace' text-anchor="middle" textLength="10.12" lengthAdjust="spacingAndGlyphs" >2</text>
<text x="1889.16" y="659.30" font-size="17.75" fill="#2e6b2a" font-weight="bold" font-family='"Liberation Mono", monospace' text-anchor="middle" textLength="10.12" lengthAdjust="spacingAndGlyphs" >8</text>
<text x="1271.50" y="697.30" font-size="16.6" fill="#404040" font-weight="bold" textLength="58.30" lengthAdjust="spacingAndGlyphs">ОБЩАЯ</text>
<text x="1271.50" y="735.20" font-size="16.6" fill="#404040" font-weight="bold" textLength="139.00" lengthAdjust="spacingAndGlyphs">РЕНТАБЕЛЬНОСТЬ</text>
<text x="1569.10" y="715.60" font-size="17.75" fill="#404040" font-weight="bold" font-family='"Liberation Mono", monospace' text-anchor="middle" textLength="10.12" lengthAdjust="spacingAndGlyphs" >9</text>
<text x="1576.35" y="715.60" font-size="17.75" fill="#404040" font-weight="bold" font-family='"Liberation Mono", monospace' text-anchor="middle" textLength="7.46" lengthAdjust="spacingAndGlyphs" stroke="#404040" stroke-width="0.58">,</text>
<text x="1583.61" y="715.60" font-size="17.75" fill="#404040" font-weight="bold" font-family='"Liberation Mono", monospace' text-anchor="middle" textLength="10.12" lengthAdjust="spacingAndGlyphs" >6</text>
<text x="1593.32" y="715.60" font-size="17.75" fill="#404040" font-weight="bold" font-family='"Liberation Mono", monospace' text-anchor="middle" textLength="10.12" lengthAdjust="spacingAndGlyphs" >1</text>
<text x="1603.15" y="715.60" font-size="17.75" fill="#404040" font-weight="bold" font-family='"Liberation Mono", monospace' text-anchor="middle" textLength="7.99" lengthAdjust="spacingAndGlyphs" stroke="#404040" stroke-width="0.58">%</text>
<text x="1713.20" y="715.60" font-size="17.75" fill="#404040" font-weight="bold" font-family='"Liberation Mono", monospace' text-anchor="middle" textLength="10.12" lengthAdjust="spacingAndGlyphs" >8</text>
<text x="1720.45" y="715.60" font-size="17.75" fill="#404040" font-weight="bold" font-family='"Liberation Mono", monospace' text-anchor="middle" textLength="7.46" lengthAdjust="spacingAndGlyphs" stroke="#404040" stroke-width="0.58">,</text>
<text x="1727.71" y="715.60" font-size="17.75" fill="#404040" font-weight="bold" font-family='"Liberation Mono", monospace' text-anchor="middle" textLength="10.12" lengthAdjust="spacingAndGlyphs" >1</text>
<text x="1737.42" y="715.60" font-size="17.75" fill="#404040" font-weight="bold" font-family='"Liberation Mono", monospace' text-anchor="middle" textLength="10.12" lengthAdjust="spacingAndGlyphs" >0</text>
<text x="1747.25" y="715.60" font-size="17.75" fill="#404040" font-weight="bold" font-family='"Liberation Mono", monospace' text-anchor="middle" textLength="7.99" lengthAdjust="spacingAndGlyphs" stroke="#404040" stroke-width="0.58">%</text>
<text x="1855.00" y="715.60" font-size="17.75" fill="#ffffff" font-weight="bold" font-family='"Liberation Mono", monospace' text-anchor="middle" textLength="10.12" lengthAdjust="spacingAndGlyphs" >1</text>
<text x="1862.25" y="715.60" font-size="17.75" fill="#ffffff" font-weight="bold" font-family='"Liberation Mono", monospace' text-anchor="middle" textLength="7.46" lengthAdjust="spacingAndGlyphs" stroke="#ffffff" stroke-width="0.58">,</text>
<text x="1869.51" y="715.60" font-size="17.75" fill="#ffffff" font-weight="bold" font-family='"Liberation Mono", monospace' text-anchor="middle" textLength="10.12" lengthAdjust="spacingAndGlyphs" >5</text>
<text x="1879.22" y="715.60" font-size="17.75" fill="#ffffff" font-weight="bold" font-family='"Liberation Mono", monospace' text-anchor="middle" textLength="10.12" lengthAdjust="spacingAndGlyphs" >2</text>
<text x="1889.05" y="715.60" font-size="17.75" fill="#ffffff" font-weight="bold" font-family='"Liberation Mono", monospace' text-anchor="middle" textLength="7.99" lengthAdjust="spacingAndGlyphs" stroke="#ffffff" stroke-width="0.58">%</text>
<text x="973.20" y="773.70" font-size="16" fill="#595959" textLength="161.50" lengthAdjust="spacingAndGlyphs">Алкогольные напитки</text>
<text x="1271.50" y="773.70" font-size="16" fill="#595959" textLength="53.50" lengthAdjust="spacingAndGlyphs">EBITDA</text>
<text x="1537.51" y="773.70" font-size="17.75" fill="#4d4d4d" font-weight="normal" font-family='"Liberation Mono", monospace' text-anchor="middle" textLength="10.12" lengthAdjust="spacingAndGlyphs" stroke="#ffffff" stroke-width="0.2">1</text>
<text x="1550.96" y="773.70" font-size="17.75" fill="#4d4d4d" font-weight="normal" font-family='"Liberation Mono", monospace' text-anchor="middle" textLength="10.12" lengthAdjust="spacingAndGlyphs" stroke="#ffffff" stroke-width="0.2">2</text>
<text x="1560.68" y="773.70" font-size="17.75" fill="#4d4d4d" font-weight="normal" font-family='"Liberation Mono", monospace' text-anchor="middle" textLength="10.12" lengthAdjust="spacingAndGlyphs" stroke="#ffffff" stroke-width="0.2">8</text>
<text x="1570.39" y="773.70" font-size="17.75" fill="#4d4d4d" font-weight="normal" font-family='"Liberation Mono", monospace' text-anchor="middle" textLength="10.12" lengthAdjust="spacingAndGlyphs" stroke="#ffffff" stroke-width="0.2">0</text>
<text x="1583.84" y="773.70" font-size="17.75" fill="#4d4d4d" font-weight="normal" font-family='"Liberation Mono", monospace' text-anchor="middle" textLength="10.12" lengthAdjust="spacingAndGlyphs" stroke="#ffffff" stroke-width="0.2">2</text>
<text x="1593.55" y="773.70" font-size="17.75" fill="#4d4d4d" font-weight="normal" font-family='"Liberation Mono", monospace' text-anchor="middle" textLength="10.12" lengthAdjust="spacingAndGlyphs" stroke="#ffffff" stroke-width="0.2">7</text>
<text x="1603.26" y="773.70" font-size="17.75" fill="#4d4d4d" font-weight="normal" font-family='"Liberation Mono", monospace' text-anchor="middle" textLength="10.12" lengthAdjust="spacingAndGlyphs" stroke="#ffffff" stroke-width="0.2">5</text>
<text x="1695.06" y="773.70" font-size="17.75" fill="#4d4d4d" font-weight="normal" font-family='"Liberation Mono", monospace' text-anchor="middle" textLength="10.12" lengthAdjust="spacingAndGlyphs" stroke="#ffffff" stroke-width="0.2">7</text>
<text x="1704.78" y="773.70" font-size="17.75" fill="#4d4d4d" font-weight="normal" font-family='"Liberation Mono", monospace' text-anchor="middle" textLength="10.12" lengthAdjust="spacingAndGlyphs" stroke="#ffffff" stroke-width="0.2">4</text>
<text x="1714.49" y="773.70" font-size="17.75" fill="#4d4d4d" font-weight="normal" font-family='"Liberation Mono", monospace' text-anchor="middle" textLength="10.12" lengthAdjust="spacingAndGlyphs" stroke="#ffffff" stroke-width="0.2">4</text>
<text x="1727.94" y="773.70" font-size="17.75" fill="#4d4d4d" font-weight="normal" font-family='"Liberation Mono", monospace' text-anchor="middle" textLength="10.12" lengthAdjust="spacingAndGlyphs" stroke="#ffffff" stroke-width="0.2">2</text>
<text x="1737.65" y="773.70" font-size="17.75" fill="#4d4d4d" font-weight="normal" font-family='"Liberation Mono", monospace' text-anchor="middle" textLength="10.12" lengthAdjust="spacingAndGlyphs" stroke="#ffffff" stroke-width="0.2">4</text>
<text x="1747.36" y="773.70" font-size="17.75" fill="#4d4d4d" font-weight="normal" font-family='"Liberation Mono", monospace' text-anchor="middle" textLength="10.12" lengthAdjust="spacingAndGlyphs" stroke="#ffffff" stroke-width="0.2">3</text>
<text x="1836.86" y="773.70" font-size="17.75" fill="#25661f" font-weight="normal" font-family='"Liberation Mono", monospace' text-anchor="middle" textLength="10.12" lengthAdjust="spacingAndGlyphs" stroke="#ffffff" stroke-width="0.2">5</text>
<text x="1846.58" y="773.70" font-size="17.75" fill="#25661f" font-weight="normal" font-family='"Liberation Mono", monospace' text-anchor="middle" textLength="10.12" lengthAdjust="spacingAndGlyphs" stroke="#ffffff" stroke-width="0.2">3</text>
<text x="1856.29" y="773.70" font-size="17.75" fill="#25661f" font-weight="normal" font-family='"Liberation Mono", monospace' text-anchor="middle" textLength="10.12" lengthAdjust="spacingAndGlyphs" stroke="#ffffff" stroke-width="0.2">6</text>
<text x="1869.74" y="773.70" font-size="17.75" fill="#25661f" font-weight="normal" font-family='"Liberation Mono", monospace' text-anchor="middle" textLength="10.12" lengthAdjust="spacingAndGlyphs" stroke="#ffffff" stroke-width="0.2">0</text>
<text x="1879.45" y="773.70" font-size="17.75" fill="#25661f" font-weight="normal" font-family='"Liberation Mono", monospace' text-anchor="middle" textLength="10.12" lengthAdjust="spacingAndGlyphs" stroke="#ffffff" stroke-width="0.2">3</text>
<text x="1889.16" y="773.70" font-size="17.75" fill="#25661f" font-weight="normal" font-family='"Liberation Mono", monospace' text-anchor="middle" textLength="10.12" lengthAdjust="spacingAndGlyphs" stroke="#ffffff" stroke-width="0.2">2</text>
<text x="1271.50" y="812.20" font-size="16" fill="#595959" textLength="68.60" lengthAdjust="spacingAndGlyphs">Продажи</text>
<text x="1537.51" y="812.20" font-size="17.75" fill="#4d4d4d" font-weight="normal" font-family='"Liberation Mono", monospace' text-anchor="middle" textLength="10.12" lengthAdjust="spacingAndGlyphs" stroke="#ffffff" stroke-width="0.2">6</text>
<text x="1550.96" y="812.20" font-size="17.75" fill="#4d4d4d" font-weight="normal" font-family='"Liberation Mono", monospace' text-anchor="middle" textLength="10.12" lengthAdjust="spacingAndGlyphs" stroke="#ffffff" stroke-width="0.2">3</text>
<text x="1560.68" y="812.20" font-size="17.75" fill="#4d4d4d" font-weight="normal" font-family='"Liberation Mono", monospace' text-anchor="middle" textLength="10.12" lengthAdjust="spacingAndGlyphs" stroke="#ffffff" stroke-width="0.2">0</text>
<text x="1570.39" y="812.20" font-size="17.75" fill="#4d4d4d" font-weight="normal" font-family='"Liberation Mono", monospace' text-anchor="middle" textLength="10.12" lengthAdjust="spacingAndGlyphs" stroke="#ffffff" stroke-width="0.2">7</text>
<text x="1583.84" y="812.20" font-size="17.75" fill="#4d4d4d" font-weight="normal" font-family='"Liberation Mono", monospace' text-anchor="middle" textLength="10.12" lengthAdjust="spacingAndGlyphs" stroke="#ffffff" stroke-width="0.2">8</text>
<text x="1593.55" y="812.20" font-size="17.75" fill="#4d4d4d" font-weight="normal" font-family='"Liberation Mono", monospace' text-anchor="middle" textLength="10.12" lengthAdjust="spacingAndGlyphs" stroke="#ffffff" stroke-width="0.2">7</text>
<text x="1603.26" y="812.20" font-size="17.75" fill="#4d4d4d" font-weight="normal" font-family='"Liberation Mono", monospace' text-anchor="middle" textLength="10.12" lengthAdjust="spacingAndGlyphs" stroke="#ffffff" stroke-width="0.2">5</text>
<text x="1681.61" y="812.20" font-size="17.75" fill="#4d4d4d" font-weight="normal" font-family='"Liberation Mono", monospace' text-anchor="middle" textLength="10.12" lengthAdjust="spacingAndGlyphs" stroke="#ffffff" stroke-width="0.2">5</text>
<text x="1695.06" y="812.20" font-size="17.75" fill="#4d4d4d" font-weight="normal" font-family='"Liberation Mono", monospace' text-anchor="middle" textLength="10.12" lengthAdjust="spacingAndGlyphs" stroke="#ffffff" stroke-width="0.2">0</text>
<text x="1704.78" y="812.20" font-size="17.75" fill="#4d4d4d" font-weight="normal" font-family='"Liberation Mono", monospace' text-anchor="middle" textLength="10.12" lengthAdjust="spacingAndGlyphs" stroke="#ffffff" stroke-width="0.2">9</text>
<text x="1714.49" y="812.20" font-size="17.75" fill="#4d4d4d" font-weight="normal" font-family='"Liberation Mono", monospace' text-anchor="middle" textLength="10.12" lengthAdjust="spacingAndGlyphs" stroke="#ffffff" stroke-width="0.2">0</text>
<text x="1727.94" y="812.20" font-size="17.75" fill="#4d4d4d" font-weight="normal" font-family='"Liberation Mono", monospace' text-anchor="middle" textLength="10.12" lengthAdjust="spacingAndGlyphs" stroke="#ffffff" stroke-width="0.2">1</text>
<text x="1737.65" y="812.20" font-size="17.75" fill="#4d4d4d" font-weight="normal" font-family='"Liberation Mono", monospace' text-anchor="middle" textLength="10.12" lengthAdjust="spacingAndGlyphs" stroke="#ffffff" stroke-width="0.2">8</text>
<text x="1747.36" y="812.20" font-size="17.75" fill="#4d4d4d" font-weight="normal" font-family='"Liberation Mono", monospace' text-anchor="middle" textLength="10.12" lengthAdjust="spacingAndGlyphs" stroke="#ffffff" stroke-width="0.2">1</text>
<text x="1823.41" y="812.20" font-size="17.75" fill="#25661f" font-weight="normal" font-family='"Liberation Mono", monospace' text-anchor="middle" textLength="10.12" lengthAdjust="spacingAndGlyphs" stroke="#ffffff" stroke-width="0.2">1</text>
<text x="1836.86" y="812.20" font-size="17.75" fill="#25661f" font-weight="normal" font-family='"Liberation Mono", monospace' text-anchor="middle" textLength="10.12" lengthAdjust="spacingAndGlyphs" stroke="#ffffff" stroke-width="0.2">2</text>
<text x="1846.58" y="812.20" font-size="17.75" fill="#25661f" font-weight="normal" font-family='"Liberation Mono", monospace' text-anchor="middle" textLength="10.12" lengthAdjust="spacingAndGlyphs" stroke="#ffffff" stroke-width="0.2">1</text>
<text x="1856.29" y="812.20" font-size="17.75" fill="#25661f" font-weight="normal" font-family='"Liberation Mono", monospace' text-anchor="middle" textLength="10.12" lengthAdjust="spacingAndGlyphs" stroke="#ffffff" stroke-width="0.2">7</text>
<text x="1869.74" y="812.20" font-size="17.75" fill="#25661f" font-weight="normal" font-family='"Liberation Mono", monospace' text-anchor="middle" textLength="10.12" lengthAdjust="spacingAndGlyphs" stroke="#ffffff" stroke-width="0.2">6</text>
<text x="1879.45" y="812.20" font-size="17.75" fill="#25661f" font-weight="normal" font-family='"Liberation Mono", monospace' text-anchor="middle" textLength="10.12" lengthAdjust="spacingAndGlyphs" stroke="#ffffff" stroke-width="0.2">9</text>
<text x="1889.16" y="812.20" font-size="17.75" fill="#25661f" font-weight="normal" font-family='"Liberation Mono", monospace' text-anchor="middle" textLength="10.12" lengthAdjust="spacingAndGlyphs" stroke="#ffffff" stroke-width="0.2">5</text>
<text x="1271.50" y="850.80" font-size="16" fill="#595959" textLength="58.00" lengthAdjust="spacingAndGlyphs">ОБЩАЯ</text>
<text x="1271.50" y="888.60" font-size="16" fill="#595959" textLength="141.70" lengthAdjust="spacingAndGlyphs">РЕНТАБЕЛЬНОСТЬ</text>
<text x="1560.68" y="869.70" font-size="17.75" fill="#4d4d4d" font-weight="normal" font-family='"Liberation Mono", monospace' text-anchor="middle" textLength="10.12" lengthAdjust="spacingAndGlyphs" stroke="#ffffff" stroke-width="0.2">2</text>
<text x="1570.39" y="869.70" font-size="17.75" fill="#4d4d4d" font-weight="normal" font-family='"Liberation Mono", monospace' text-anchor="middle" textLength="10.12" lengthAdjust="spacingAndGlyphs" stroke="#ffffff" stroke-width="0.2">0</text>
<text x="1577.00" y="869.70" font-size="17.75" fill="#4d4d4d" font-weight="normal" font-family='"Liberation Mono", monospace' text-anchor="middle" textLength="5.86" lengthAdjust="spacingAndGlyphs" stroke="#ffffff" stroke-width="0.2">,</text>
<text x="1583.61" y="869.70" font-size="17.75" fill="#4d4d4d" font-weight="normal" font-family='"Liberation Mono", monospace' text-anchor="middle" textLength="10.12" lengthAdjust="spacingAndGlyphs" stroke="#ffffff" stroke-width="0.2">3</text>
<text x="1593.32" y="869.70" font-size="17.75" fill="#4d4d4d" font-weight="normal" font-family='"Liberation Mono", monospace' text-anchor="middle" textLength="10.12" lengthAdjust="spacingAndGlyphs" stroke="#ffffff" stroke-width="0.2">0</text>
<text x="1603.15" y="869.70" font-size="17.75" fill="#4d4d4d" font-weight="normal" font-family='"Liberation Mono", monospace' text-anchor="middle" textLength="7.99" lengthAdjust="spacingAndGlyphs" stroke="#ffffff" stroke-width="0.2">%</text>
<text x="1704.78" y="869.70" font-size="17.75" fill="#4d4d4d" font-weight="normal" font-family='"Liberation Mono", monospace' text-anchor="middle" textLength="10.12" lengthAdjust="spacingAndGlyphs" stroke="#ffffff" stroke-width="0.2">1</text>
<text x="1714.49" y="869.70" font-size="17.75" fill="#4d4d4d" font-weight="normal" font-family='"Liberation Mono", monospace' text-anchor="middle" textLength="10.12" lengthAdjust="spacingAndGlyphs" stroke="#ffffff" stroke-width="0.2">4</text>
<text x="1721.10" y="869.70" font-size="17.75" fill="#4d4d4d" font-weight="normal" font-family='"Liberation Mono", monospace' text-anchor="middle" textLength="5.86" lengthAdjust="spacingAndGlyphs" stroke="#ffffff" stroke-width="0.2">,</text>
<text x="1727.71" y="869.70" font-size="17.75" fill="#4d4d4d" font-weight="normal" font-family='"Liberation Mono", monospace' text-anchor="middle" textLength="10.12" lengthAdjust="spacingAndGlyphs" stroke="#ffffff" stroke-width="0.2">6</text>
<text x="1737.42" y="869.70" font-size="17.75" fill="#4d4d4d" font-weight="normal" font-family='"Liberation Mono", monospace' text-anchor="middle" textLength="10.12" lengthAdjust="spacingAndGlyphs" stroke="#ffffff" stroke-width="0.2">2</text>
<text x="1747.25" y="869.70" font-size="17.75" fill="#4d4d4d" font-weight="normal" font-family='"Liberation Mono", monospace' text-anchor="middle" textLength="7.99" lengthAdjust="spacingAndGlyphs" stroke="#ffffff" stroke-width="0.2">%</text>
<text x="1856.29" y="869.70" font-size="17.75" fill="#ffffff" font-weight="normal" font-family='"Liberation Mono", monospace' text-anchor="middle" textLength="10.12" lengthAdjust="spacingAndGlyphs" >5</text>
<text x="1862.90" y="869.70" font-size="17.75" fill="#ffffff" font-weight="normal" font-family='"Liberation Mono", monospace' text-anchor="middle" textLength="5.86" lengthAdjust="spacingAndGlyphs" >,</text>
<text x="1869.51" y="869.70" font-size="17.75" fill="#ffffff" font-weight="normal" font-family='"Liberation Mono", monospace' text-anchor="middle" textLength="10.12" lengthAdjust="spacingAndGlyphs" >6</text>
<text x="1879.22" y="869.70" font-size="17.75" fill="#ffffff" font-weight="normal" font-family='"Liberation Mono", monospace' text-anchor="middle" textLength="10.12" lengthAdjust="spacingAndGlyphs" >8</text>
<text x="1889.05" y="869.70" font-size="17.75" fill="#ffffff" font-weight="normal" font-family='"Liberation Mono", monospace' text-anchor="middle" textLength="7.99" lengthAdjust="spacingAndGlyphs" >%</text>
<text x="973.20" y="927.30" font-size="16" fill="#595959" textLength="185.80" lengthAdjust="spacingAndGlyphs">Безалкогольные напитки</text>
<text x="1271.50" y="926.30" font-size="16" fill="#595959" textLength="53.50" lengthAdjust="spacingAndGlyphs">EBITDA</text>
<text x="1550.96" y="926.30" font-size="17.75" fill="#4d4d4d" font-weight="normal" font-family='"Liberation Mono", monospace' text-anchor="middle" textLength="10.12" lengthAdjust="spacingAndGlyphs" stroke="#ffffff" stroke-width="0.2">9</text>
<text x="1560.68" y="926.30" font-size="17.75" fill="#4d4d4d" font-weight="normal" font-family='"Liberation Mono", monospace' text-anchor="middle" textLength="10.12" lengthAdjust="spacingAndGlyphs" stroke="#ffffff" stroke-width="0.2">8</text>
<text x="1570.39" y="926.30" font-size="17.75" fill="#4d4d4d" font-weight="normal" font-family='"Liberation Mono", monospace' text-anchor="middle" textLength="10.12" lengthAdjust="spacingAndGlyphs" stroke="#ffffff" stroke-width="0.2">0</text>
<text x="1583.84" y="926.30" font-size="17.75" fill="#4d4d4d" font-weight="normal" font-family='"Liberation Mono", monospace' text-anchor="middle" textLength="10.12" lengthAdjust="spacingAndGlyphs" stroke="#ffffff" stroke-width="0.2">4</text>
<text x="1593.55" y="926.30" font-size="17.75" fill="#4d4d4d" font-weight="normal" font-family='"Liberation Mono", monospace' text-anchor="middle" textLength="10.12" lengthAdjust="spacingAndGlyphs" stroke="#ffffff" stroke-width="0.2">9</text>
<text x="1603.26" y="926.30" font-size="17.75" fill="#4d4d4d" font-weight="normal" font-family='"Liberation Mono", monospace' text-anchor="middle" textLength="10.12" lengthAdjust="spacingAndGlyphs" stroke="#ffffff" stroke-width="0.2">9</text>
<text x="1695.06" y="926.30" font-size="17.75" fill="#4d4d4d" font-weight="normal" font-family='"Liberation Mono", monospace' text-anchor="middle" textLength="10.12" lengthAdjust="spacingAndGlyphs" stroke="#ffffff" stroke-width="0.2">6</text>
<text x="1704.78" y="926.30" font-size="17.75" fill="#4d4d4d" font-weight="normal" font-family='"Liberation Mono", monospace' text-anchor="middle" textLength="10.12" lengthAdjust="spacingAndGlyphs" stroke="#ffffff" stroke-width="0.2">9</text>
<text x="1714.49" y="926.30" font-size="17.75" fill="#4d4d4d" font-weight="normal" font-family='"Liberation Mono", monospace' text-anchor="middle" textLength="10.12" lengthAdjust="spacingAndGlyphs" stroke="#ffffff" stroke-width="0.2">0</text>
<text x="1727.94" y="926.30" font-size="17.75" fill="#4d4d4d" font-weight="normal" font-family='"Liberation Mono", monospace' text-anchor="middle" textLength="10.12" lengthAdjust="spacingAndGlyphs" stroke="#ffffff" stroke-width="0.2">4</text>
<text x="1737.65" y="926.30" font-size="17.75" fill="#4d4d4d" font-weight="normal" font-family='"Liberation Mono", monospace' text-anchor="middle" textLength="10.12" lengthAdjust="spacingAndGlyphs" stroke="#ffffff" stroke-width="0.2">7</text>
<text x="1747.36" y="926.30" font-size="17.75" fill="#4d4d4d" font-weight="normal" font-family='"Liberation Mono", monospace' text-anchor="middle" textLength="10.12" lengthAdjust="spacingAndGlyphs" stroke="#ffffff" stroke-width="0.2">8</text>
<text x="1836.86" y="926.30" font-size="17.75" fill="#25661f" font-weight="normal" font-family='"Liberation Mono", monospace' text-anchor="middle" textLength="10.12" lengthAdjust="spacingAndGlyphs" stroke="#ffffff" stroke-width="0.2">2</text>
<text x="1846.58" y="926.30" font-size="17.75" fill="#25661f" font-weight="normal" font-family='"Liberation Mono", monospace' text-anchor="middle" textLength="10.12" lengthAdjust="spacingAndGlyphs" stroke="#ffffff" stroke-width="0.2">9</text>
<text x="1856.29" y="926.30" font-size="17.75" fill="#25661f" font-weight="normal" font-family='"Liberation Mono", monospace' text-anchor="middle" textLength="10.12" lengthAdjust="spacingAndGlyphs" stroke="#ffffff" stroke-width="0.2">0</text>
<text x="1869.74" y="926.30" font-size="17.75" fill="#25661f" font-weight="normal" font-family='"Liberation Mono", monospace' text-anchor="middle" textLength="10.12" lengthAdjust="spacingAndGlyphs" stroke="#ffffff" stroke-width="0.2">0</text>
<text x="1879.45" y="926.30" font-size="17.75" fill="#25661f" font-weight="normal" font-family='"Liberation Mono", monospace' text-anchor="middle" textLength="10.12" lengthAdjust="spacingAndGlyphs" stroke="#ffffff" stroke-width="0.2">2</text>
<text x="1889.16" y="926.30" font-size="17.75" fill="#25661f" font-weight="normal" font-family='"Liberation Mono", monospace' text-anchor="middle" textLength="10.12" lengthAdjust="spacingAndGlyphs" stroke="#ffffff" stroke-width="0.2">1</text>
<text x="1271.50" y="965.50" font-size="16" fill="#595959" textLength="68.60" lengthAdjust="spacingAndGlyphs">Продажи</text>
<text x="1537.51" y="965.50" font-size="17.75" fill="#4d4d4d" font-weight="normal" font-family='"Liberation Mono", monospace' text-anchor="middle" textLength="10.12" lengthAdjust="spacingAndGlyphs" stroke="#ffffff" stroke-width="0.2">6</text>
<text x="1550.96" y="965.50" font-size="17.75" fill="#4d4d4d" font-weight="normal" font-family='"Liberation Mono", monospace' text-anchor="middle" textLength="10.12" lengthAdjust="spacingAndGlyphs" stroke="#ffffff" stroke-width="0.2">2</text>
<text x="1560.68" y="965.50" font-size="17.75" fill="#4d4d4d" font-weight="normal" font-family='"Liberation Mono", monospace' text-anchor="middle" textLength="10.12" lengthAdjust="spacingAndGlyphs" stroke="#ffffff" stroke-width="0.2">5</text>
<text x="1570.39" y="965.50" font-size="17.75" fill="#4d4d4d" font-weight="normal" font-family='"Liberation Mono", monospace' text-anchor="middle" textLength="10.12" lengthAdjust="spacingAndGlyphs" stroke="#ffffff" stroke-width="0.2">1</text>
<text x="1583.84" y="965.50" font-size="17.75" fill="#4d4d4d" font-weight="normal" font-family='"Liberation Mono", monospace' text-anchor="middle" textLength="10.12" lengthAdjust="spacingAndGlyphs" stroke="#ffffff" stroke-width="0.2">4</text>
<text x="1593.55" y="965.50" font-size="17.75" fill="#4d4d4d" font-weight="normal" font-family='"Liberation Mono", monospace' text-anchor="middle" textLength="10.12" lengthAdjust="spacingAndGlyphs" stroke="#ffffff" stroke-width="0.2">9</text>
<text x="1603.26" y="965.50" font-size="17.75" fill="#4d4d4d" font-weight="normal" font-family='"Liberation Mono", monospace' text-anchor="middle" textLength="10.12" lengthAdjust="spacingAndGlyphs" stroke="#ffffff" stroke-width="0.2">9</text>
<text x="1681.61" y="965.50" font-size="17.75" fill="#4d4d4d" font-weight="normal" font-family='"Liberation Mono", monospace' text-anchor="middle" textLength="10.12" lengthAdjust="spacingAndGlyphs" stroke="#ffffff" stroke-width="0.2">4</text>
<text x="1695.06" y="965.50" font-size="17.75" fill="#4d4d4d" font-weight="normal" font-family='"Liberation Mono", monospace' text-anchor="middle" textLength="10.12" lengthAdjust="spacingAndGlyphs" stroke="#ffffff" stroke-width="0.2">8</text>
<text x="1704.78" y="965.50" font-size="17.75" fill="#4d4d4d" font-weight="normal" font-family='"Liberation Mono", monospace' text-anchor="middle" textLength="10.12" lengthAdjust="spacingAndGlyphs" stroke="#ffffff" stroke-width="0.2">4</text>
<text x="1714.49" y="965.50" font-size="17.75" fill="#4d4d4d" font-weight="normal" font-family='"Liberation Mono", monospace' text-anchor="middle" textLength="10.12" lengthAdjust="spacingAndGlyphs" stroke="#ffffff" stroke-width="0.2">9</text>
<text x="1727.94" y="965.50" font-size="17.75" fill="#4d4d4d" font-weight="normal" font-family='"Liberation Mono", monospace' text-anchor="middle" textLength="10.12" lengthAdjust="spacingAndGlyphs" stroke="#ffffff" stroke-width="0.2">2</text>
<text x="1737.65" y="965.50" font-size="17.75" fill="#4d4d4d" font-weight="normal" font-family='"Liberation Mono", monospace' text-anchor="middle" textLength="10.12" lengthAdjust="spacingAndGlyphs" stroke="#ffffff" stroke-width="0.2">9</text>
<text x="1747.36" y="965.50" font-size="17.75" fill="#4d4d4d" font-weight="normal" font-family='"Liberation Mono", monospace' text-anchor="middle" textLength="10.12" lengthAdjust="spacingAndGlyphs" stroke="#ffffff" stroke-width="0.2">7</text>
<text x="1823.41" y="965.50" font-size="17.75" fill="#25661f" font-weight="normal" font-family='"Liberation Mono", monospace' text-anchor="middle" textLength="10.12" lengthAdjust="spacingAndGlyphs" stroke="#ffffff" stroke-width="0.2">1</text>
<text x="1836.86" y="965.50" font-size="17.75" fill="#25661f" font-weight="normal" font-family='"Liberation Mono", monospace' text-anchor="middle" textLength="10.12" lengthAdjust="spacingAndGlyphs" stroke="#ffffff" stroke-width="0.2">4</text>
<text x="1846.58" y="965.50" font-size="17.75" fill="#25661f" font-weight="normal" font-family='"Liberation Mono", monospace' text-anchor="middle" textLength="10.12" lengthAdjust="spacingAndGlyphs" stroke="#ffffff" stroke-width="0.2">0</text>
<text x="1856.29" y="965.50" font-size="17.75" fill="#25661f" font-weight="normal" font-family='"Liberation Mono", monospace' text-anchor="middle" textLength="10.12" lengthAdjust="spacingAndGlyphs" stroke="#ffffff" stroke-width="0.2">2</text>
<text x="1869.74" y="965.50" font-size="17.75" fill="#25661f" font-weight="normal" font-family='"Liberation Mono", monospace' text-anchor="middle" textLength="10.12" lengthAdjust="spacingAndGlyphs" stroke="#ffffff" stroke-width="0.2">2</text>
<text x="1879.45" y="965.50" font-size="17.75" fill="#25661f" font-weight="normal" font-family='"Liberation Mono", monospace' text-anchor="middle" textLength="10.12" lengthAdjust="spacingAndGlyphs" stroke="#ffffff" stroke-width="0.2">0</text>
<text x="1889.16" y="965.50" font-size="17.75" fill="#25661f" font-weight="normal" font-family='"Liberation Mono", monospace' text-anchor="middle" textLength="10.12" lengthAdjust="spacingAndGlyphs" stroke="#ffffff" stroke-width="0.2">3</text>
<text x="1271.50" y="1005.00" font-size="16" fill="#595959" textLength="58.00" lengthAdjust="spacingAndGlyphs">ОБЩАЯ</text>
<text x="1271.50" y="1041.50" font-size="16" fill="#595959" textLength="141.70" lengthAdjust="spacingAndGlyphs">РЕНТАБЕЛЬНОСТЬ</text>
<text x="1560.68" y="1023.30" font-size="17.75" fill="#4d4d4d" font-weight="normal" font-family='"Liberation Mono", monospace' text-anchor="middle" textLength="10.12" lengthAdjust="spacingAndGlyphs" stroke="#ffffff" stroke-width="0.2">1</text>
<text x="1570.39" y="1023.30" font-size="17.75" fill="#4d4d4d" font-weight="normal" font-family='"Liberation Mono", monospace' text-anchor="middle" textLength="10.12" lengthAdjust="spacingAndGlyphs" stroke="#ffffff" stroke-width="0.2">5</text>
<text x="1577.00" y="1023.30" font-size="17.75" fill="#4d4d4d" font-weight="normal" font-family='"Liberation Mono", monospace' text-anchor="middle" textLength="5.86" lengthAdjust="spacingAndGlyphs" stroke="#ffffff" stroke-width="0.2">,</text>
<text x="1583.61" y="1023.30" font-size="17.75" fill="#4d4d4d" font-weight="normal" font-family='"Liberation Mono", monospace' text-anchor="middle" textLength="10.12" lengthAdjust="spacingAndGlyphs" stroke="#ffffff" stroke-width="0.2">6</text>
<text x="1593.32" y="1023.30" font-size="17.75" fill="#4d4d4d" font-weight="normal" font-family='"Liberation Mono", monospace' text-anchor="middle" textLength="10.12" lengthAdjust="spacingAndGlyphs" stroke="#ffffff" stroke-width="0.2">8</text>
<text x="1603.15" y="1023.30" font-size="17.75" fill="#4d4d4d" font-weight="normal" font-family='"Liberation Mono", monospace' text-anchor="middle" textLength="7.99" lengthAdjust="spacingAndGlyphs" stroke="#ffffff" stroke-width="0.2">%</text>
<text x="1704.78" y="1023.30" font-size="17.75" fill="#4d4d4d" font-weight="normal" font-family='"Liberation Mono", monospace' text-anchor="middle" textLength="10.12" lengthAdjust="spacingAndGlyphs" stroke="#ffffff" stroke-width="0.2">1</text>
<text x="1714.49" y="1023.30" font-size="17.75" fill="#4d4d4d" font-weight="normal" font-family='"Liberation Mono", monospace' text-anchor="middle" textLength="10.12" lengthAdjust="spacingAndGlyphs" stroke="#ffffff" stroke-width="0.2">4</text>
<text x="1721.10" y="1023.30" font-size="17.75" fill="#4d4d4d" font-weight="normal" font-family='"Liberation Mono", monospace' text-anchor="middle" textLength="5.86" lengthAdjust="spacingAndGlyphs" stroke="#ffffff" stroke-width="0.2">,</text>
<text x="1727.71" y="1023.30" font-size="17.75" fill="#4d4d4d" font-weight="normal" font-family='"Liberation Mono", monospace' text-anchor="middle" textLength="10.12" lengthAdjust="spacingAndGlyphs" stroke="#ffffff" stroke-width="0.2">2</text>
<text x="1737.42" y="1023.30" font-size="17.75" fill="#4d4d4d" font-weight="normal" font-family='"Liberation Mono", monospace' text-anchor="middle" textLength="10.12" lengthAdjust="spacingAndGlyphs" stroke="#ffffff" stroke-width="0.2">4</text>
<text x="1747.25" y="1023.30" font-size="17.75" fill="#4d4d4d" font-weight="normal" font-family='"Liberation Mono", monospace' text-anchor="middle" textLength="7.99" lengthAdjust="spacingAndGlyphs" stroke="#ffffff" stroke-width="0.2">%</text>
<text x="1856.29" y="1023.30" font-size="17.75" fill="#ffffff" font-weight="normal" font-family='"Liberation Mono", monospace' text-anchor="middle" textLength="10.12" lengthAdjust="spacingAndGlyphs" >1</text>
<text x="1862.90" y="1023.30" font-size="17.75" fill="#ffffff" font-weight="normal" font-family='"Liberation Mono", monospace' text-anchor="middle" textLength="5.86" lengthAdjust="spacingAndGlyphs" >,</text>
<text x="1869.51" y="1023.30" font-size="17.75" fill="#ffffff" font-weight="normal" font-family='"Liberation Mono", monospace' text-anchor="middle" textLength="10.12" lengthAdjust="spacingAndGlyphs" >4</text>
<text x="1879.22" y="1023.30" font-size="17.75" fill="#ffffff" font-weight="normal" font-family='"Liberation Mono", monospace' text-anchor="middle" textLength="10.12" lengthAdjust="spacingAndGlyphs" >5</text>
<text x="1889.05" y="1023.30" font-size="17.75" fill="#ffffff" font-weight="normal" font-family='"Liberation Mono", monospace' text-anchor="middle" textLength="7.99" lengthAdjust="spacingAndGlyphs" >%</text>
</svg>
</body></html>
